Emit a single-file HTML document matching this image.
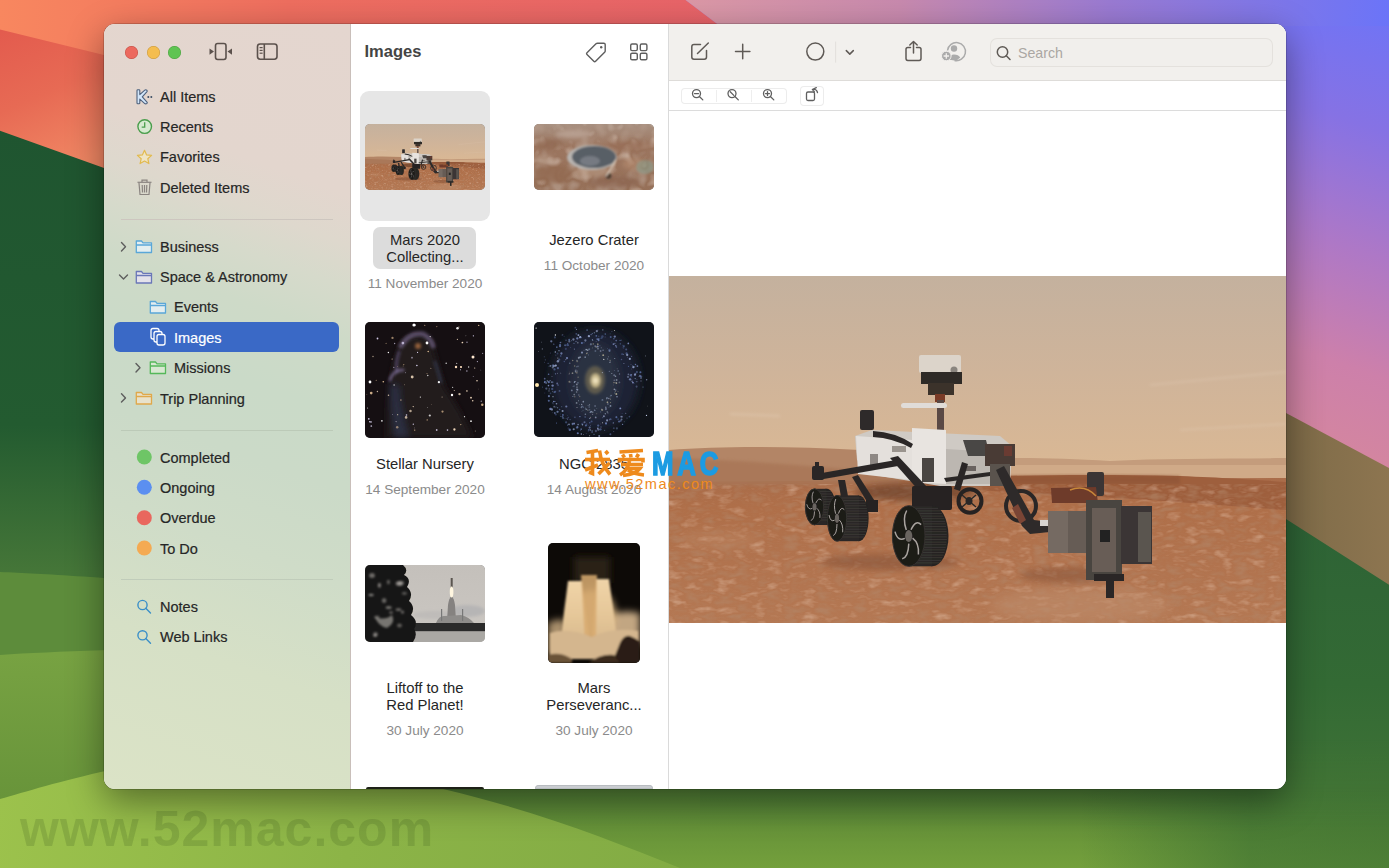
<!DOCTYPE html>
<html><head><meta charset="utf-8">
<style>
html,body{margin:0;padding:0;}
body{width:1389px;height:868px;overflow:hidden;position:relative;font-family:"Liberation Sans",sans-serif;background:#2a5e33;}
.abs{position:absolute;}
#wall{position:absolute;left:0;top:0;}
#win{position:absolute;left:104px;top:24px;width:1182px;height:765px;border-radius:11px;overflow:hidden;box-shadow:0 12px 36px rgba(0,0,0,0.42),0 0 0 0.5px rgba(0,0,0,0.3);background:#fff;}
#side{position:absolute;left:0;top:0;width:246px;height:765px;background:linear-gradient(200deg,#e4d6cf 0%,#e3d6ce 20%,#ded8cd 26%,#d6dacb 31%,#cedac8 37%,#cadac8 46%,#cbdac8 55%,#cfdcc8 66%,#d6e0c6 80%,#dbe3c6 100%);}
#sep1{position:absolute;left:246px;top:0;width:1px;height:765px;background:#c9bfba;}
#mid{position:absolute;left:247px;top:0;width:317px;height:765px;background:#fff;}
#sep2{position:absolute;left:564px;top:0;width:1px;height:765px;background:#dadada;}
#right{position:absolute;left:565px;top:0;width:617px;height:765px;background:#fff;}
.it{position:absolute;font-size:14.5px;color:#262626;white-space:nowrap;-webkit-text-stroke-width:0.2px;}
.thumb{border-radius:5px;overflow:hidden;background:#777;}
.ttl{position:absolute;font-size:14.8px;color:#262626;text-align:center;white-space:nowrap;line-height:17px;}
.dt{position:absolute;font-size:13.6px;color:#8b8b8b;text-align:center;white-space:nowrap;}
</style></head><body>
<svg width="0" height="0" style="position:absolute"><defs><symbol id="marsScene" viewBox="669 276 617 347" preserveAspectRatio="xMidYMid slice">
  <defs>
   <linearGradient id="msky" x1="0" y1="276" x2="0" y2="470" gradientUnits="userSpaceOnUse"><stop offset="0" stop-color="#c4b19e"/><stop offset="0.5" stop-color="#cfb49a"/><stop offset="1" stop-color="#dab894"/></linearGradient>
   <linearGradient id="mgnd" x1="0" y1="470" x2="0" y2="623" gradientUnits="userSpaceOnUse"><stop offset="0" stop-color="#a86c4a"/><stop offset="0.25" stop-color="#af6f49"/><stop offset="0.6" stop-color="#b1734e"/><stop offset="1" stop-color="#b47853"/></linearGradient>
   <filter id="mb1" x="-10%" y="-10%" width="120%" height="120%"><feGaussianBlur stdDeviation="0.6"/></filter>
   <filter id="mb2" x="-20%" y="-20%" width="140%" height="140%"><feGaussianBlur stdDeviation="1.5"/></filter>
   <filter id="mb3" x="-20%" y="-20%" width="140%" height="140%"><feGaussianBlur stdDeviation="3"/></filter>
   <filter id="mb6" x="-20%" y="-20%" width="140%" height="140%"><feGaussianBlur stdDeviation="6"/></filter>
  </defs>
  <rect x="669" y="276" width="617" height="200" fill="url(#msky)"/>
  <!-- faint clouds -->
  <g filter="url(#mb2)" opacity="0.35">
   <path d="M730,414 L780,416" stroke="#e8d4c0" stroke-width="2"/>
   <path d="M1150,385 L1286,372" stroke="#e2cdb8" stroke-width="2"/>
   <path d="M1180,430 L1286,424" stroke="#e2cdb8" stroke-width="2"/>
  </g>
  <rect x="669" y="470" width="617" height="153" fill="url(#mgnd)"/>
  <!-- distant hills left -->
  <path d="M669,450 C720,446 790,446 860,450 L960,456 L960,480 L669,482 Z" fill="#b38566" filter="url(#mb1)"/>
  <path d="M669,458 C740,460 820,466 900,474 L900,484 L669,486 Z" fill="#a87656" opacity="0.8" filter="url(#mb2)"/>
  <!-- right: far hills, light band, dune -->
  <path d="M960,459 C1020,457 1060,458 1110,461 C1160,458 1220,459 1286,458 L1286,478 L960,480 Z" fill="#c49c7c" filter="url(#mb1)"/>
  <path d="M960,465 L1286,465 L1286,478 L960,478 Z" fill="#d0aa88" filter="url(#mb1)"/>
  <path d="M940,478 C1000,475 1100,474 1180,476 C1230,478 1260,480 1286,482 L1286,510 C1230,506 1160,500 1100,497 C1040,494 980,490 940,488 Z" fill="#9e5f3e" filter="url(#mb1)"/>
  <path d="M940,478 C1000,475 1100,474 1180,476 L1180,484 C1100,484 1000,484 940,484 Z" fill="#8c5236" opacity="0.6" filter="url(#mb2)"/>
  <!-- ground texture -->
  <filter id="mtex" x="0" y="0" width="1" height="1">
   <feTurbulence type="fractalNoise" baseFrequency="0.06 0.14" numOctaves="3" seed="4" result="n"/>
   <feColorMatrix in="n" type="matrix" values="0 0 0 0 0.45  0 0 0 0 0.25  0 0 0 0 0.15  -3 0 0 0 1.5" result="d"/>
   <feColorMatrix in="n" type="matrix" values="0 0 0 0 0.78  0 0 0 0 0.56  0 0 0 0 0.43  2.4 0 0 0 -1.3" result="l"/>
   <feMerge><feMergeNode in="d"/><feMergeNode in="l"/></feMerge>
   <feComposite in2="SourceAlpha" operator="in"/>
  </filter>
  <rect x="669" y="484" width="617" height="139" fill="#000" filter="url(#mtex)" opacity="0.55"/>
  <g filter="url(#mb6)" opacity="0.5">
   <ellipse cx="1080" cy="605" rx="90" ry="18" fill="#c09070"/>
   <ellipse cx="720" cy="540" rx="40" ry="8" fill="#bc8664"/>
  </g>
  <!-- shadows -->
  <ellipse cx="890" cy="562" rx="70" ry="8" fill="#7a4a30" opacity="0.45" filter="url(#mb3)"/>
  <ellipse cx="915" cy="492" rx="60" ry="9" fill="#5a3420" opacity="0.55" filter="url(#mb3)"/>
  <ellipse cx="1070" cy="575" rx="50" ry="8" fill="#7a4a30" opacity="0.4" filter="url(#mb3)"/>
  <!-- rover -->
  <g filter="url(#mb1)">
   <!-- mast head -->
   <rect x="919" y="355" width="42" height="18" rx="2" fill="#dcd4ca"/>
   <circle cx="954" cy="370" r="3.5" fill="#8a857f"/>
   <rect x="921" y="372" width="41" height="12" fill="#2e2a28"/>
   <rect x="928" y="383" width="26" height="12" fill="#3a302c"/>
   <rect x="935" y="394" width="10" height="8" fill="#7a3a28"/>
   <rect x="937" y="400" width="7" height="32" fill="#5a4a44"/>
   <rect x="901" y="403" width="46" height="5" rx="2.5" fill="#e0dcd8"/>
   <!-- RTG/antenna -->
   <rect x="860" y="410" width="14" height="20" rx="2" fill="#2e2c2c"/>
   <!-- body -->
   <path d="M855,436 L872,430 L1000,436 L1012,446 L1010,486 L940,486 L880,476 L857,460 Z" fill="#cfcac4"/>
   <path d="M856,436 L912,440 L912,480 L858,474 Z" fill="#e4e0dc"/>
   <path d="M912,428 L946,430 L946,484 L912,482 Z" fill="#e8e4e0"/>
   <path d="M946,449 L995,452 L995,484 L946,484 Z" fill="#bcb7b1"/>
   <path d="M873,431 Q895,432 913,444 L911,448 Q893,438 873,437 Z" fill="#2a2726"/>
   <rect x="870" y="454" width="8" height="14" fill="#8e8884"/>
   <rect x="892" y="446" width="14" height="6" fill="#9a948e"/>
   <rect x="922" y="458" width="12" height="24" fill="#4a4542"/>
   <rect x="962" y="466" width="14" height="5" fill="#6a6460"/>
   <path d="M966,447 A10,9 0 0 1 984,447" fill="none" stroke="#3a3838" stroke-width="1.8"/>
   <path d="M963,440 L986,440 L990,456 L968,456 Z" fill="#4a4644"/>
   <rect x="985" y="444" width="30" height="22" fill="#4a3a34"/>
   <rect x="1004" y="446" width="8" height="10" fill="#6a3a30"/>
   <rect x="990" y="464" width="20" height="22" fill="#5a534e"/>
   <!-- suspension -->
   <path d="M816,474 L896,460 L898,466 L818,480 Z" fill="#2a2827"/>
   <rect x="812" y="466" width="12" height="14" rx="2" fill="#2a2827"/>
   <rect x="815" y="462" width="4" height="6" fill="#2a2827"/>
   <path d="M838,480 L845,480 L848,496 L841,497 Z" fill="#2a2827"/>
   <path d="M852,477 L858,475 L878,506 L872,510 Z" fill="#2a2827"/>
   <rect x="866" y="500" width="12" height="12" fill="#252322"/>
   <path d="M890,458 L898,456 L928,488 L920,492 Z" fill="#2a2827"/>
   <rect x="912" y="486" width="40" height="24" rx="2" fill="#252322"/>
   <path d="M962,462 L968,464 L960,491 L954,489 Z" fill="#2a2827"/>
   <path d="M944,478 L990,472 L990,476 L946,482 Z" fill="#2a2827"/>
   <!-- wheels -->
   <ellipse cx="826.5" cy="506.9" rx="9.2" ry="18.1" fill="#252321"/><rect x="814.5" y="488.8" width="12.0" height="36.2" fill="#2a2826"/><path d="M817.4,491.4 L830.8,491.4" stroke="#3e3b38" stroke-width="0.8"/><path d="M818.4,494.0 L832.3,494.0" stroke="#3e3b38" stroke-width="0.8"/><path d="M819.0,496.6 L833.3,496.6" stroke="#3e3b38" stroke-width="0.8"/><path d="M819.5,499.2 L834.0,499.2" stroke="#3e3b38" stroke-width="0.8"/><path d="M819.8,501.8 L834.4,501.8" stroke="#3e3b38" stroke-width="0.8"/><path d="M820.0,504.4 L834.7,504.4" stroke="#3e3b38" stroke-width="0.8"/><path d="M820.0,507.0 L834.8,507.0" stroke="#3e3b38" stroke-width="0.8"/><path d="M820.0,509.6 L834.7,509.6" stroke="#3e3b38" stroke-width="0.8"/><path d="M819.8,512.2 L834.4,512.2" stroke="#3e3b38" stroke-width="0.8"/><path d="M819.5,514.8 L833.9,514.8" stroke="#3e3b38" stroke-width="0.8"/><path d="M819.0,517.4 L833.2,517.4" stroke="#3e3b38" stroke-width="0.8"/><path d="M818.3,520.0 L832.2,520.0" stroke="#3e3b38" stroke-width="0.8"/><ellipse cx="814.5" cy="506.9" rx="9.2" ry="18.1" fill="#1c1a19" stroke="#34312e" stroke-width="1"/><path d="M816.7,508.2 Q820.5,511.2 819.9,517.9" stroke="#a9a49e" stroke-width="0.9" fill="none"/><path d="M814.5,511.4 Q814.3,519.6 810.8,520.5" stroke="#a9a49e" stroke-width="0.9" fill="none"/><path d="M812.3,508.4 Q808.3,510.4 806.8,504.3" stroke="#a9a49e" stroke-width="0.9" fill="none"/><path d="M813.1,503.3 Q810.9,496.4 813.4,491.7" stroke="#a9a49e" stroke-width="0.9" fill="none"/><path d="M815.8,503.2 Q818.5,496.9 821.5,500.1" stroke="#a9a49e" stroke-width="0.9" fill="none"/><ellipse cx="814.5" cy="506.9" rx="2.0" ry="3.6" fill="#6a6560"/>
   <ellipse cx="859.0" cy="518.3" rx="9.6" ry="22.9" fill="#252321"/><rect x="837.0" y="495.4" width="22.0" height="45.8" fill="#2a2826"/><path d="M839.7,498.0 L863.0,498.0" stroke="#3e3b38" stroke-width="0.8"/><path d="M840.7,500.6 L864.5,500.6" stroke="#3e3b38" stroke-width="0.8"/><path d="M841.3,503.2 L865.5,503.2" stroke="#3e3b38" stroke-width="0.8"/><path d="M841.8,505.8 L866.2,505.8" stroke="#3e3b38" stroke-width="0.8"/><path d="M842.2,508.4 L866.8,508.4" stroke="#3e3b38" stroke-width="0.8"/><path d="M842.5,511.0 L867.2,511.0" stroke="#3e3b38" stroke-width="0.8"/><path d="M842.6,513.6 L867.5,513.6" stroke="#3e3b38" stroke-width="0.8"/><path d="M842.7,516.2 L867.6,516.2" stroke="#3e3b38" stroke-width="0.8"/><path d="M842.8,518.8 L867.6,518.8" stroke="#3e3b38" stroke-width="0.8"/><path d="M842.7,521.4 L867.6,521.4" stroke="#3e3b38" stroke-width="0.8"/><path d="M842.6,524.0 L867.4,524.0" stroke="#3e3b38" stroke-width="0.8"/><path d="M842.4,526.6 L867.1,526.6" stroke="#3e3b38" stroke-width="0.8"/><path d="M842.1,529.2 L866.6,529.2" stroke="#3e3b38" stroke-width="0.8"/><path d="M841.7,531.8 L866.0,531.8" stroke="#3e3b38" stroke-width="0.8"/><path d="M841.1,534.4 L865.1,534.4" stroke="#3e3b38" stroke-width="0.8"/><path d="M840.3,537.0 L864.0,537.0" stroke="#3e3b38" stroke-width="0.8"/><ellipse cx="837.0" cy="518.3" rx="9.6" ry="22.9" fill="#1c1a19" stroke="#34312e" stroke-width="1"/><path d="M839.3,520.0 Q843.3,523.8 842.7,532.3" stroke="#a9a49e" stroke-width="1.0" fill="none"/><path d="M837.0,524.0 Q836.8,534.3 833.2,535.5" stroke="#a9a49e" stroke-width="1.0" fill="none"/><path d="M834.7,520.1 Q830.5,522.7 829.0,515.0" stroke="#a9a49e" stroke-width="1.0" fill="none"/><path d="M835.6,513.7 Q833.2,505.0 835.8,499.0" stroke="#a9a49e" stroke-width="1.0" fill="none"/><path d="M838.4,513.6 Q841.1,505.7 844.3,509.7" stroke="#a9a49e" stroke-width="1.0" fill="none"/><ellipse cx="837.0" cy="518.3" rx="2.1" ry="4.6" fill="#6a6560"/>
   <ellipse cx="932.2" cy="536.0" rx="16.3" ry="30.3" fill="#252321"/><rect x="908.7" y="505.7" width="23.5" height="60.6" fill="#2a2826"/><path d="M912.7,508.3 L938.1,508.3" stroke="#3e3b38" stroke-width="0.8"/><path d="M914.2,510.9 L940.4,510.9" stroke="#3e3b38" stroke-width="0.8"/><path d="M915.3,513.5 L942.0,513.5" stroke="#3e3b38" stroke-width="0.8"/><path d="M916.1,516.1 L943.3,516.1" stroke="#3e3b38" stroke-width="0.8"/><path d="M916.7,518.7 L944.2,518.7" stroke="#3e3b38" stroke-width="0.8"/><path d="M917.3,521.3 L945.0,521.3" stroke="#3e3b38" stroke-width="0.8"/><path d="M917.7,523.9 L945.6,523.9" stroke="#3e3b38" stroke-width="0.8"/><path d="M918.0,526.5 L946.1,526.5" stroke="#3e3b38" stroke-width="0.8"/><path d="M918.2,529.1 L946.5,529.1" stroke="#3e3b38" stroke-width="0.8"/><path d="M918.4,531.7 L946.7,531.7" stroke="#3e3b38" stroke-width="0.8"/><path d="M918.5,534.3 L946.8,534.3" stroke="#3e3b38" stroke-width="0.8"/><path d="M918.5,536.9 L946.9,536.9" stroke="#3e3b38" stroke-width="0.8"/><path d="M918.4,539.5 L946.8,539.5" stroke="#3e3b38" stroke-width="0.8"/><path d="M918.3,542.1 L946.6,542.1" stroke="#3e3b38" stroke-width="0.8"/><path d="M918.1,544.7 L946.3,544.7" stroke="#3e3b38" stroke-width="0.8"/><path d="M917.8,547.3 L945.8,547.3" stroke="#3e3b38" stroke-width="0.8"/><path d="M917.4,549.9 L945.2,549.9" stroke="#3e3b38" stroke-width="0.8"/><path d="M916.9,552.5 L944.5,552.5" stroke="#3e3b38" stroke-width="0.8"/><path d="M916.3,555.1 L943.6,555.1" stroke="#3e3b38" stroke-width="0.8"/><path d="M915.5,557.7 L942.4,557.7" stroke="#3e3b38" stroke-width="0.8"/><path d="M914.5,560.3 L941.0,560.3" stroke="#3e3b38" stroke-width="0.8"/><path d="M913.2,562.9 L939.0,562.9" stroke="#3e3b38" stroke-width="0.8"/><ellipse cx="908.7" cy="536.0" rx="16.3" ry="30.3" fill="#1c1a19" stroke="#34312e" stroke-width="1"/><path d="M912.6,538.2 Q919.4,543.3 918.4,554.5" stroke="#a9a49e" stroke-width="1.5" fill="none"/><path d="M908.8,543.6 Q908.3,557.2 902.2,558.8" stroke="#a9a49e" stroke-width="1.5" fill="none"/><path d="M904.8,538.4 Q897.7,541.8 895.0,531.6" stroke="#a9a49e" stroke-width="1.5" fill="none"/><path d="M906.3,529.9 Q902.3,518.4 906.7,510.5" stroke="#a9a49e" stroke-width="1.5" fill="none"/><path d="M911.0,529.8 Q915.7,519.3 921.1,524.6" stroke="#a9a49e" stroke-width="1.5" fill="none"/><ellipse cx="908.7" cy="536.0" rx="3.6" ry="6.1" fill="#6a6560"/>
   <ellipse cx="970" cy="501" rx="11.5" ry="11.8" fill="none" stroke="#262422" stroke-width="4"/>
   <ellipse cx="969" cy="501" rx="3.5" ry="4" fill="#2a2826"/>
   <path d="M962,495 L976,507 M962,507 L976,495" stroke="#2a2826" stroke-width="1.5"/>
   <ellipse cx="1021" cy="506" rx="15" ry="15" fill="none" stroke="#2a2827" stroke-width="4"/>
   <!-- arm -->
   <path d="M996,470 L1004,466 L1034,520 L1050,522 L1050,532 L1030,534 L1022,526 Z" fill="#2e2b2a"/>
   <path d="M1012,508 L1018,504 L1026,520 L1020,524 Z" fill="#7a4436"/>
   <rect x="1040" y="520" width="10" height="6" fill="#d8d4d0"/>
   <!-- turret -->
   <rect x="1087" y="472" width="17" height="24" rx="2" fill="#3a3634"/>
   <path d="M1051,488 L1096,487 L1098,503 L1052,503 Z" fill="#6e3a2a"/>
   <path d="M1070,490 Q1085,484 1096,496" stroke="#c8883a" stroke-width="1.5" fill="none"/>
   <rect x="1048" y="511" width="38" height="42" fill="#665c54"/>
   <rect x="1048" y="511" width="20" height="42" fill="#746a62"/>
   <rect x="1086" y="500" width="36" height="80" fill="#4a4440"/>
   <rect x="1092" y="508" width="24" height="64" fill="#675d56"/>
   <rect x="1100" y="530" width="10" height="12" fill="#222"/>
   <rect x="1121" y="506" width="31" height="58" fill="#3a3634"/>
   <rect x="1138" y="512" width="13" height="50" fill="#5a5450"/>
   <rect x="1106" y="578" width="8" height="20" fill="#2a2827"/>
   <rect x="1094" y="574" width="30" height="7" fill="#2a2827"/>
  </g>
 </symbol></defs></svg>
<svg id="wall" width="1389" height="868" viewBox="0 0 1389 868">
 <defs>
  <linearGradient id="gOr" x1="0" y1="0" x2="720" y2="0" gradientUnits="userSpaceOnUse"><stop offset="0" stop-color="#f8875f"/><stop offset="0.4" stop-color="#ee6e5f"/><stop offset="1" stop-color="#e76369"/></linearGradient>
  <linearGradient id="gRed" x1="0" y1="30" x2="60" y2="170" gradientUnits="userSpaceOnUse"><stop offset="0" stop-color="#e35b4e"/><stop offset="0.5" stop-color="#e76a54"/><stop offset="1" stop-color="#f08663"/></linearGradient>
  <linearGradient id="gPur" x1="1389" y1="0" x2="1250" y2="430" gradientUnits="userSpaceOnUse"><stop offset="0" stop-color="#6c74f8"/><stop offset="0.28" stop-color="#8672e4"/><stop offset="0.55" stop-color="#ae78c6"/><stop offset="0.8" stop-color="#cd80aa"/><stop offset="1" stop-color="#d4869f"/></linearGradient>
  <linearGradient id="gPurTop" x1="690" y1="0" x2="1389" y2="0" gradientUnits="userSpaceOnUse"><stop offset="0" stop-color="#db98a6"/><stop offset="0.3" stop-color="#c88aae"/><stop offset="0.6" stop-color="#9a7ad2"/><stop offset="1" stop-color="#6b74f8"/></linearGradient>
  <linearGradient id="gGreenL" x1="0" y1="130" x2="0" y2="868" gradientUnits="userSpaceOnUse"><stop offset="0" stop-color="#1f5530"/><stop offset="0.4" stop-color="#235b30"/><stop offset="0.6" stop-color="#457638"/><stop offset="1" stop-color="#4f7f38"/></linearGradient>
  <linearGradient id="gGreenR" x1="0" y1="500" x2="0" y2="868" gradientUnits="userSpaceOnUse"><stop offset="0" stop-color="#2d6236"/><stop offset="0.5" stop-color="#336a34"/><stop offset="1" stop-color="#467838"/></linearGradient>
  <linearGradient id="mBotG" x1="0" y1="740" x2="0" y2="830" gradientUnits="userSpaceOnUse"><stop offset="0" stop-color="#fff" stop-opacity="0"/><stop offset="1" stop-color="#fff" stop-opacity="1"/></linearGradient>
  <mask id="mBot" maskUnits="userSpaceOnUse" x="0" y="0" width="1389" height="868"><rect x="0" y="0" width="1389" height="868" fill="url(#mBotG)"/></mask>
  <linearGradient id="gBot" x1="0" y1="789" x2="0" y2="868" gradientUnits="userSpaceOnUse"><stop offset="0" stop-color="#5a8636"/><stop offset="1" stop-color="#74a03c"/></linearGradient>
  <linearGradient id="gBotR" x1="1080" y1="0" x2="1389" y2="0" gradientUnits="userSpaceOnUse"><stop offset="0" stop-color="#2e6430" stop-opacity="0"/><stop offset="0.55" stop-color="#2e6430" stop-opacity="0.5"/><stop offset="1" stop-color="#2e6430" stop-opacity="0.55"/></linearGradient>
  <linearGradient id="gHill2" x1="0" y1="655" x2="0" y2="800" gradientUnits="userSpaceOnUse"><stop offset="0" stop-color="#77a242"/><stop offset="1" stop-color="#68943a"/></linearGradient>
  <linearGradient id="gHill" x1="0" y1="780" x2="700" y2="868" gradientUnits="userSpaceOnUse"><stop offset="0" stop-color="#9cc24c"/><stop offset="0.5" stop-color="#8cb447"/><stop offset="1" stop-color="#82ab44"/></linearGradient>
  <linearGradient id="gBrown" x1="1286" y1="0" x2="1389" y2="0" gradientUnits="userSpaceOnUse"><stop offset="0" stop-color="#7e6b48"/><stop offset="1" stop-color="#8d7550"/></linearGradient>
 </defs>
 <rect x="0" y="0" width="1389" height="868" fill="#2e6535"/>
 <rect x="0" y="100" width="700" height="768" fill="url(#gGreenL)"/>
 <path d="M0,572 C60,574 120,580 443,600 L443,868 L0,868 Z" fill="#5d8c3b"/>
 <path d="M0,655 C80,650 200,646 443,650 L443,868 L0,868 Z" fill="url(#gHill2)"/>
 <rect x="700" y="400" width="689" height="468" fill="url(#gGreenR)"/>
 <g mask="url(#mBot)"><path d="M380,740 L1389,740 L1389,868 L380,868 Z" fill="url(#gBot)"/>
 <path d="M380,740 L1389,740 L1389,868 L380,868 Z" fill="url(#gBotR)"/></g>
 <path d="M0,799 C25,792 60,781 110,770 C200,750 330,760 443,789 C540,812 610,840 680,868 L0,868 Z" fill="url(#gHill)"/>
 <polygon points="-2,-2 722,-2 722,200 -2,31" fill="url(#gOr)"/>
 <polygon points="-2,29 104,55 420,135 420,290 104,168 -2,130" fill="url(#gRed)"/>
 <polygon points="700,80 1391,440 1391,586 1286,519 700,150" fill="url(#gBrown)"/>
 <polygon points="683,-2 1391,-2 1391,469 1286,413 716,23" fill="url(#gPur)"/>
 <polygon points="683,-2 1391,-2 1391,26 720,26" fill="url(#gPurTop)"/>
</svg>
<div class="abs" style="left:20px;top:800px;font-size:50px;font-weight:700;color:rgba(60,90,30,0.2);letter-spacing:1px;">www.52mac.com</div>

<div id="win">
 <div id="side"></div>
 <div id="sep1"></div>
 <div id="mid"></div>
 <div id="sep2"></div>
 <div id="right"></div>
</div>

<div id="ui" class="abs" style="left:0;top:0;width:1389px;height:868px;">
 <!-- traffic lights -->
 <div class="abs" style="left:124.9px;top:45.6px;width:13px;height:13px;border-radius:50%;background:#ec695e;box-shadow:inset 0 0 0 0.5px rgba(150,40,30,0.5);"></div>
 <div class="abs" style="left:146.7px;top:45.6px;width:13px;height:13px;border-radius:50%;background:#f4bd4f;box-shadow:inset 0 0 0 0.5px rgba(160,110,20,0.5);"></div>
 <div class="abs" style="left:168.3px;top:45.6px;width:13px;height:13px;border-radius:50%;background:#5fc452;box-shadow:inset 0 0 0 0.5px rgba(40,120,30,0.5);"></div>
 <svg class="abs" style="left:200px;top:35px" width="90" height="32" viewBox="200 35 90 32">
  <g fill="none" stroke="#5b514c" stroke-width="1.6">
   <rect x="215.5" y="43.5" width="10.5" height="16" rx="2.2"/>
   <rect x="257.5" y="44" width="19.5" height="15.2" rx="2.6"/>
   <line x1="264.3" y1="44" x2="264.3" y2="59.2"/>
  </g>
  <g fill="#5b514c"><polygon points="209.5,48.5 214,51.6 209.5,54.7"/><polygon points="232,48.5 227.5,51.6 232,54.7"/>
   <rect x="259.6" y="47" width="3" height="1.2"/><rect x="259.6" y="49.8" width="3" height="1.2"/><rect x="259.6" y="52.6" width="3" height="1.2"/></g>
 </svg>

 <!-- sidebar icons -->
 <svg class="abs" style="left:0;top:0" width="360" height="660" viewBox="0 0 360 660">
  <!-- all items K -->
  <path d="M137,90.6 Q137,89.8 137.8,89.8 L139,89.8 Q139.8,89.8 139.8,90.6 L139.8,94.6 L144.5,90.3 Q145.3,89.6 146.2,89.9 L146.9,90.3 Q147.6,91 147,91.7 L142.3,96.9 L147,102.1 Q147.6,102.8 146.9,103.4 L146.2,103.8 Q145.3,104.1 144.5,103.4 L139.8,99.2 L139.8,103 Q139.8,103.8 139,103.8 L137.8,103.8 Q137,103.8 137,103 Z" fill="#d2e6fa" stroke="#4e617c" stroke-width="1.1" stroke-linejoin="round"/>
  <circle cx="148.3" cy="96.9" r="1" fill="#3e4f66"/><circle cx="151.3" cy="96.9" r="1" fill="#3e4f66"/>
  <!-- recents clock -->
  <circle cx="144.7" cy="126.6" r="6.8" fill="#d6ead0" stroke="#4a9e4c" stroke-width="1.4"/>
  <path d="M144.7,122.3 L144.7,127.1 L141.7,127.1" fill="none" stroke="#4a9e4c" stroke-width="1.3"/>
  <!-- star -->
  <path d="M144.5,150.3 L146.6,154.9 L151.6,155.4 L147.8,158.7 L148.9,163.6 L144.5,161.1 L140.1,163.6 L141.2,158.7 L137.4,155.4 L142.4,154.9 Z" fill="#efe4c4" stroke="#e2ba4e" stroke-width="1.2" stroke-linejoin="round"/>
  <!-- trash -->
  <g fill="none" stroke="#8a8480" stroke-width="1.2">
   <path d="M137.5,182.3 L151.5,182.3"/><path d="M142,182 L142,180.2 L147,180.2 L147,182"/>
   <path d="M139,183 L140,194.5 L149,194.5 L150,183"/>
   <path d="M142.2,185 L142.5,192.5 M144.5,185 L144.5,192.5 M146.8,185 L146.5,192.5"/>
  </g>
  <!-- separators -->
  <rect x="121" y="219" width="212" height="1" fill="#cdc6bf"/>
  <rect x="121" y="430" width="212" height="1" fill="#bccab8"/>
  <rect x="121" y="579" width="212" height="1" fill="#c0ccba"/>
  <!-- chevrons -->
  <g fill="none" stroke="#5e5e5e" stroke-width="1.4" stroke-linecap="round" stroke-linejoin="round">
   <path d="M121.5,242.5 L125.5,246.7 L121.5,250.9"/>
   <path d="M119.5,275 L123.5,279 L127.5,275"/>
   <path d="M136,363.5 L140,367.7 L136,371.9"/>
   <path d="M121.5,393.7 L125.5,397.9 L121.5,402.1"/>
  </g>
  <!-- folders -->
  <g stroke-width="1.3" stroke-linejoin="round">
   <path d="M136.3,241 L141.5,241 L143,242.8 L151.5,242.8 L151.5,252.5 L136.3,252.5 Z M136.3,245 L151.5,245" fill="#e4eef0" stroke="#5aa7d8"/>
   <path d="M136.3,271.5 L141.5,271.5 L143,273.3 L151.5,273.3 L151.5,283 L136.3,283 Z M136.3,275.5 L151.5,275.5" fill="#e4e2ea" stroke="#6a77b8"/>
   <path d="M150.3,301.5 L155.5,301.5 L157,303.3 L165.5,303.3 L165.5,313 L150.3,313 Z M150.3,305.5 L165.5,305.5" fill="#e4eef0" stroke="#5aa7d8"/>
   <path d="M150.3,362 L155.5,362 L157,363.8 L165.5,363.8 L165.5,373.5 L150.3,373.5 Z M150.3,366 L165.5,366" fill="#d8e8d2" stroke="#55b85a"/>
   <path d="M136.3,392.5 L141.5,392.5 L143,394.3 L151.5,394.3 L151.5,404 L136.3,404 Z M136.3,396.5 L151.5,396.5" fill="#e8e2cc" stroke="#e0a84a"/>
  </g>
  <!-- dots -->
  <circle cx="144.3" cy="457" r="7.5" fill="#6ec566"/>
  <circle cx="144.3" cy="487.3" r="7.5" fill="#5b8ff0"/>
  <circle cx="144.3" cy="517.7" r="7.5" fill="#e9675e"/>
  <circle cx="144.3" cy="548" r="7.5" fill="#f4aa52"/>
  <!-- magnifiers -->
  <g fill="none" stroke="#3a8fc8" stroke-width="1.4" stroke-linecap="round">
   <circle cx="142.5" cy="605" r="4.6"/><path d="M145.8,608.3 L150.5,613"/>
   <circle cx="142.5" cy="635.3" r="4.6"/><path d="M145.8,638.6 L150.5,643.3"/>
  </g>
 </svg>
 <!-- selection -->
 <div class="abs" style="left:114px;top:322px;width:225px;height:30px;border-radius:6px;background:#3a69c6;"></div>
 <svg class="abs" style="left:148px;top:326px" width="22" height="22" viewBox="148 326 22 22">
  <g fill="#3a69c6" stroke="#fff" stroke-width="1.3" stroke-linejoin="round">
   <rect x="151" y="328.5" width="8" height="10.5" rx="2"/>
   <rect x="154" y="331.5" width="8" height="10.5" rx="2"/>
   <rect x="157" y="334.5" width="8" height="10.5" rx="2"/>
  </g>
 </svg>


 <!-- right toolbar -->
 <div class="abs" style="left:669px;top:24px;width:617px;height:56px;background:#f2f0ed;border-top-right-radius:11px;"></div>
 <div class="abs" style="left:669px;top:80px;width:617px;height:1px;background:#dedcd9;"></div>
 <div class="abs" style="left:669px;top:110px;width:617px;height:1px;background:#dcdcdc;"></div>
 <div class="abs" style="left:989.5px;top:37.5px;width:283px;height:29.5px;border-radius:7px;background:#f1efec;box-shadow:inset 0 0 0 1px #e4e1dd;"></div>
 <div class="abs" style="left:1018px;top:44.5px;font-size:14.2px;color:#aba7a3;">Search</div>
 <svg class="abs" style="left:669px;top:24px" width="617" height="90" viewBox="669 24 617 90">
  <g fill="none" stroke="#5f5a56" stroke-width="1.5" stroke-linecap="round" stroke-linejoin="round">
   <path d="M700.5,44.5 L694,44.5 Q691.8,44.5 691.8,46.7 L691.8,57 Q691.8,59.2 694,59.2 L704.3,59.2 Q706.5,59.2 706.5,57 L706.5,50.5"/>
   <path d="M697.5,53.5 L708.3,43"/>
   <path d="M742.7,44.3 L742.7,58.7 M735.5,51.5 L749.9,51.5"/>
   <circle cx="815.3" cy="51.6" r="8.5"/>
   <path d="M846.3,50.6 L849.8,54.1 L853.3,50.6"/>
   <path d="M913.5,41.8 L913.5,53 M909.8,45 L913.5,41.5 L917.2,45"/>
   <path d="M910.5,47.5 L907.8,47.5 Q906,47.5 906,49.3 L906,58.6 Q906,60.4 907.8,60.4 L919.2,60.4 Q921,60.4 921,58.6 L921,49.3 Q921,47.5 919.2,47.5 L916.5,47.5"/>
   <circle cx="1002.5" cy="52" r="5.2"/><path d="M1006.3,55.8 L1010,59.5"/>
  </g>
  <rect x="835.3" y="41.6" width="0.8" height="21" fill="#dedbd7"/>
  <!-- person add (disabled) -->
  <g fill="none" stroke="#ababab" stroke-width="1.5"><path d="M947.5,50.5 A9,9 0 1 1 954.5,60.4"/></g>
  <circle cx="954" cy="48.5" r="3.2" fill="#ababab"/>
  <path d="M949.5,59.8 Q950,54.5 954,54.5 Q958.5,54.5 960.2,57.5 Q958,60.3 954.5,60.4 Z" fill="#ababab"/>
  <circle cx="946.3" cy="56" r="4.8" fill="#ababab" stroke="#f2f0ed" stroke-width="1"/>
  <path d="M946.3,53.3 L946.3,58.7 M943.6,56 L949,56" stroke="#f2f0ed" stroke-width="1.3"/>
 </svg>
 <!-- zoom controls -->
 <div class="abs" style="left:680.5px;top:87.5px;width:106px;height:16.5px;border-radius:4px;box-shadow:inset 0 0 0 1px #ececec;"></div>
 <div class="abs" style="left:715.5px;top:90px;width:1px;height:12px;background:#eeeeee;"></div>
 <div class="abs" style="left:751px;top:90px;width:1px;height:12px;background:#eeeeee;"></div>
 <div class="abs" style="left:799.5px;top:85.5px;width:24px;height:20px;border-radius:4px;box-shadow:inset 0 0 0 1px #ececec;"></div>
 <svg class="abs" style="left:669px;top:81px" width="200" height="29" viewBox="669 81 200 29">
  <g fill="none" stroke="#5f5f5f" stroke-width="1.3" stroke-linecap="round">
   <circle cx="696.5" cy="93.6" r="4"/><path d="M699.4,96.5 L702.8,99.9 M694.5,93.6 L698.5,93.6"/>
   <circle cx="732" cy="93.6" r="4"/><path d="M734.9,96.5 L738.3,99.9 M730.2,91.8 L733.8,95.4"/>
   <circle cx="767.5" cy="93.6" r="4"/><path d="M770.4,96.5 L773.8,99.9 M765.5,93.6 L769.5,93.6 M767.5,91.6 L767.5,95.6"/>
   <rect x="806.5" y="92" width="8" height="8.5" rx="1.5"/>
   <path d="M812.5,89.5 Q816.5,88.5 817.5,92.5 M816.3,87.6 L812.5,89.5 L814.4,91.8"/>
  </g>
 </svg>
 <!-- main image -->
 <div id="mars" class="abs" style="left:669px;top:276px;width:617px;height:347px;overflow:hidden;"><svg width="617" height="347" style="display:block"><use href="#marsScene" width="617" height="347"/></svg></div>
 <!-- middle header -->
 <div class="abs" style="left:364.5px;top:42.3px;font-size:16.5px;font-weight:700;color:#444;">Images</div>
 <svg class="abs" style="left:580px;top:36px" width="75" height="32" viewBox="580 36 75 32">
  <g fill="none" stroke="#5e5e5e" stroke-width="1.4" stroke-linejoin="round">
   <path d="M597.5,43.2 L603.8,43.2 Q605.2,43.2 605.2,44.6 L605.2,50.9 Q605.2,51.7 604.6,52.3 L595.6,61.3 Q594.7,62.2 593.8,61.3 L587,54.5 Q586.1,53.6 587,52.7 L596,43.7 Q596.6,43.2 597.5,43.2 Z"/>
   <rect x="630.7" y="44" width="6.6" height="6.6" rx="1.4"/><rect x="640.3" y="44" width="6.6" height="6.6" rx="1.4"/>
   <rect x="630.7" y="53.2" width="6.6" height="6.6" rx="1.4"/><rect x="640.3" y="53.2" width="6.6" height="6.6" rx="1.4"/>
  </g>
  <circle cx="601.2" cy="47.3" r="1.2" fill="#5e5e5e"/>
 </svg>
 <!-- item1 selected -->
 <div class="abs" style="left:360px;top:91px;width:130px;height:130px;border-radius:9px;background:#e6e6e6;"></div>
 <div class="abs" style="left:373px;top:227px;width:103px;height:42px;border-radius:7px;background:#dcdcdc;"></div>
 <div id="th1" class="abs thumb" style="left:365px;top:124px;width:120px;height:66px;"><svg width="120" height="66" style="display:block"><use href="#marsScene" width="120" height="66"/></svg></div>
 <div id="th2" class="abs thumb" style="left:534px;top:124px;width:120px;height:66px;"><svg width="120" height="66" viewBox="0 0 120 66" style="display:block">
 <defs><linearGradient id="jz" x1="0" y1="0" x2="0" y2="1"><stop offset="0" stop-color="#a89080"/><stop offset="0.35" stop-color="#9c7660"/><stop offset="1" stop-color="#967058"/></linearGradient>
 <filter id="jb2" x="-30%" y="-30%" width="160%" height="160%"><feGaussianBlur stdDeviation="2"/></filter>
 <filter id="jb1" x="-30%" y="-30%" width="160%" height="160%"><feGaussianBlur stdDeviation="0.8"/></filter></defs>
 <rect width="120" height="66" fill="url(#jz)"/>
 <filter id="jtex" x="0" y="0" width="1" height="1">
   <feTurbulence type="fractalNoise" baseFrequency="0.07" numOctaves="2" seed="9" result="n"/>
   <feColorMatrix in="n" type="matrix" values="0 0 0 0 0.45  0 0 0 0 0.32  0 0 0 0 0.25  -3.2 0 0 0 1.6" result="d"/>
   <feColorMatrix in="n" type="matrix" values="0 0 0 0 0.76  0 0 0 0 0.64  0 0 0 0 0.56  2.6 0 0 0 -1.45" result="l"/>
   <feMerge><feMergeNode in="d"/><feMergeNode in="l"/></feMerge>
   <feComposite in2="SourceAlpha" operator="in"/>
 </filter>
 <rect width="120" height="66" fill="#000" filter="url(#jtex)" opacity="0.8"/>
 <g filter="url(#jb2)">
  <ellipse cx="15" cy="20" rx="14" ry="5" fill="#8e6650" opacity="0.7"/>
  <ellipse cx="95" cy="22" rx="22" ry="6" fill="#946a52" opacity="0.6"/>
  <ellipse cx="20" cy="50" rx="20" ry="9" fill="#92684e" opacity="0.7"/>
  <ellipse cx="80" cy="58" rx="25" ry="6" fill="#8a6450" opacity="0.6"/>
  <ellipse cx="40" cy="10" rx="18" ry="4" fill="#c0aa9c" opacity="0.7"/>
  <ellipse cx="10" cy="36" rx="10" ry="5" fill="#bca290" opacity="0.6"/>
  <ellipse cx="100" cy="40" rx="12" ry="6" fill="#b48a6e" opacity="0.6"/>
  <ellipse cx="58" cy="48" rx="20" ry="5" fill="#b89a84" opacity="0.6"/>
 </g>
 <g filter="url(#jb1)">
  <ellipse cx="58" cy="33.5" rx="25" ry="12.5" fill="#b8b4b0"/>
  <ellipse cx="60" cy="33" rx="22" ry="11" fill="#585e66"/>
  <ellipse cx="56" cy="37" rx="10" ry="5" fill="#8a8e94" opacity="0.6"/>
  <ellipse cx="111" cy="43" rx="9" ry="7" fill="#84a090" opacity="0.5"/>
  <circle cx="74.5" cy="52" r="3" fill="#4e3a2e"/>
  <path d="M82,36 L76,46 L72,52" stroke="#d0c0b0" stroke-width="1.5" fill="none"/>
 </g>
</svg></div>
 <div id="th3" class="abs thumb" style="left:365px;top:322px;width:120px;height:116px;"><svg width="120" height="116" viewBox="0 0 120 116" style="display:block">
 <defs><filter id="sb4" x="-50%" y="-50%" width="200%" height="200%"><feGaussianBlur stdDeviation="3"/></filter>
 <filter id="sb2" x="-50%" y="-50%" width="200%" height="200%"><feGaussianBlur stdDeviation="1.8"/></filter></defs>
 <rect width="120" height="116" fill="#150f12"/>
 <g filter="url(#sb4)">
  <path d="M36,20 Q48,8 66,18 Q72,40 80,66 Q96,88 108,116 L22,116 Q22,80 26,58 Q28,40 36,20 Z" fill="#231a1e"/>
  <path d="M24,62 Q26,90 30,116 L44,116 Q36,90 34,64 Z" fill="#2e3448" opacity="0.8"/>
 </g>
 <g filter="url(#sb2)" fill="none" stroke-linecap="round">
  <path d="M36,24 Q44,10 58,12 Q66,16 68,24" stroke="#8a7aa6" stroke-width="5" opacity="0.55"/>
  <path d="M34,30 Q30,42 32,50" stroke="#6a5a8a" stroke-width="3" opacity="0.6"/>
  <path d="M25,58 Q28,48 38,48" stroke="#8a7aa8" stroke-width="3" opacity="0.7"/>
  <path d="M70,40 Q74,52 76,60" stroke="#3e4a6a" stroke-width="3" opacity="0.5"/>
 </g>
 <circle cx="53" cy="24" r="3" fill="#c88048" opacity="0.7" filter="url(#sb2)"/>
 <circle cx="29.1" cy="63.0" r="0.68" fill="#ffffff" opacity="0.80"/><circle cx="108.2" cy="54.5" r="0.46" fill="#e8e0ff" opacity="0.77"/><circle cx="65.9" cy="46.3" r="0.48" fill="#ffe6c8" opacity="0.93"/><circle cx="62.7" cy="85.5" r="0.39" fill="#ffffff" opacity="0.65"/><circle cx="4.7" cy="99.7" r="0.75" fill="#e8e0ff" opacity="0.86"/><circle cx="109.7" cy="46.0" r="0.59" fill="#ffe6c8" opacity="0.94"/><circle cx="12.5" cy="16.5" r="0.88" fill="#e8e0ff" opacity="0.89"/><circle cx="101.9" cy="49.0" r="0.67" fill="#e8e0ff" opacity="0.79"/><circle cx="107.7" cy="78.7" r="0.82" fill="#ffe6c8" opacity="0.85"/><circle cx="39.5" cy="62.8" r="0.41" fill="#ffe6c8" opacity="0.82"/><circle cx="117.6" cy="31.4" r="0.62" fill="#e8e0ff" opacity="0.54"/><circle cx="95.5" cy="47.8" r="0.51" fill="#e8e0ff" opacity="0.94"/><circle cx="6.2" cy="71.1" r="1.36" fill="#ffd8a8" opacity="0.78"/><circle cx="109.8" cy="32.8" r="0.37" fill="#ffffff" opacity="0.54"/><circle cx="71.8" cy="4.6" r="0.57" fill="#ffd8a8" opacity="0.58"/><circle cx="6.0" cy="99.9" r="0.88" fill="#e8e0ff" opacity="0.69"/><circle cx="103.6" cy="45.0" r="0.72" fill="#ffffff" opacity="0.81"/><circle cx="112.0" cy="58.8" r="0.75" fill="#ffe6c8" opacity="0.97"/><circle cx="52.6" cy="30.4" r="0.54" fill="#e8e0ff" opacity="0.99"/><circle cx="38.2" cy="43.9" r="0.42" fill="#ffd8a8" opacity="0.73"/><circle cx="81.2" cy="41.2" r="0.76" fill="#ffffff" opacity="0.79"/><circle cx="113.7" cy="3.4" r="0.70" fill="#ffd8a8" opacity="0.80"/><circle cx="38.8" cy="42.5" r="0.55" fill="#ffd8a8" opacity="0.65"/><circle cx="45.5" cy="89.0" r="1.28" fill="#ffe6c8" opacity="0.66"/><circle cx="27.3" cy="92.6" r="0.45" fill="#e8e0ff" opacity="0.82"/><circle cx="12.4" cy="69.5" r="0.72" fill="#ffe6c8" opacity="0.72"/><circle cx="102.0" cy="20.3" r="0.71" fill="#e8e0ff" opacity="0.64"/><circle cx="93.9" cy="4.9" r="0.52" fill="#ffe6c8" opacity="0.93"/><circle cx="41.1" cy="95.4" r="1.31" fill="#ffe6c8" opacity="0.71"/><circle cx="62.2" cy="97.9" r="0.70" fill="#ffd8a8" opacity="0.71"/><circle cx="49.3" cy="105.9" r="0.35" fill="#e8e0ff" opacity="0.78"/><circle cx="117.3" cy="82.8" r="1.23" fill="#ffd8a8" opacity="0.77"/><circle cx="106.0" cy="99.2" r="0.88" fill="#ffffff" opacity="0.91"/><circle cx="6.3" cy="104.0" r="0.86" fill="#e8e0ff" opacity="0.79"/><circle cx="2.6" cy="86.0" r="0.51" fill="#ffffff" opacity="0.76"/><circle cx="49.8" cy="108.1" r="0.54" fill="#ffd8a8" opacity="0.99"/><circle cx="64.8" cy="93.5" r="1.11" fill="#ffffff" opacity="0.77"/><circle cx="97.4" cy="20.5" r="0.86" fill="#ffe6c8" opacity="0.91"/><circle cx="1.9" cy="72.7" r="0.38" fill="#ffd8a8" opacity="0.62"/><circle cx="73.9" cy="60.2" r="1.16" fill="#ffffff" opacity="0.93"/><circle cx="92.5" cy="6.3" r="1.24" fill="#ffffff" opacity="0.93"/><circle cx="11.2" cy="58.2" r="0.52" fill="#ffd8a8" opacity="0.69"/><circle cx="47.0" cy="35.7" r="0.89" fill="#e8e0ff" opacity="0.56"/><circle cx="66.6" cy="82.6" r="0.39" fill="#ffe6c8" opacity="0.52"/><circle cx="55.4" cy="75.1" r="0.70" fill="#ffffff" opacity="0.81"/><circle cx="51.9" cy="43.5" r="0.74" fill="#e8e0ff" opacity="0.98"/><circle cx="50.4" cy="3.0" r="0.50" fill="#ffffff" opacity="0.90"/><circle cx="27.5" cy="15.9" r="1.16" fill="#ffd8a8" opacity="0.56"/><circle cx="82.5" cy="108.1" r="0.82" fill="#e8e0ff" opacity="0.83"/><circle cx="87.6" cy="65.3" r="0.67" fill="#ffffff" opacity="0.74"/><circle cx="28.8" cy="45.3" r="0.66" fill="#e8e0ff" opacity="0.59"/><circle cx="3.8" cy="96.9" r="0.81" fill="#e8e0ff" opacity="0.92"/><circle cx="113.4" cy="67.0" r="0.37" fill="#ffe6c8" opacity="0.55"/><circle cx="89.4" cy="107.5" r="1.16" fill="#ffe6c8" opacity="0.91"/><circle cx="29.6" cy="21.5" r="0.69" fill="#e8e0ff" opacity="0.63"/><circle cx="71.7" cy="108.0" r="0.88" fill="#e8e0ff" opacity="0.75"/><circle cx="115.8" cy="48.1" r="0.44" fill="#e8e0ff" opacity="0.58"/><circle cx="48.3" cy="102.2" r="0.62" fill="#e8e0ff" opacity="0.96"/><circle cx="62.0" cy="51.5" r="0.45" fill="#ffd8a8" opacity="0.88"/><circle cx="18.3" cy="59.8" r="0.82" fill="#ffd8a8" opacity="0.84"/><circle cx="101.9" cy="68.9" r="0.89" fill="#ffe6c8" opacity="0.65"/><circle cx="32.6" cy="92.7" r="0.66" fill="#ffe6c8" opacity="0.66"/><circle cx="92.4" cy="17.4" r="0.61" fill="#ffe6c8" opacity="0.73"/><circle cx="99.5" cy="94.7" r="0.61" fill="#ffffff" opacity="0.93"/><circle cx="48.2" cy="84.6" r="0.61" fill="#ffe6c8" opacity="0.95"/><circle cx="77.5" cy="89.6" r="1.11" fill="#ffd8a8" opacity="0.62"/><circle cx="23.4" cy="30.5" r="0.74" fill="#ffffff" opacity="0.95"/><circle cx="31.1" cy="99.6" r="0.58" fill="#ffffff" opacity="0.56"/><circle cx="32.2" cy="105.2" r="1.23" fill="#ffd8a8" opacity="0.50"/><circle cx="40.5" cy="50.7" r="0.47" fill="#e8e0ff" opacity="0.70"/><circle cx="65.2" cy="14.6" r="0.72" fill="#ffffff" opacity="0.72"/><circle cx="63.2" cy="29.6" r="0.74" fill="#ffd8a8" opacity="0.88"/><circle cx="35.9" cy="78.1" r="0.79" fill="#ffd8a8" opacity="0.55"/><circle cx="112.4" cy="39.6" r="0.64" fill="#e8e0ff" opacity="0.75"/><circle cx="8.0" cy="34.6" r="0.76" fill="#ffe6c8" opacity="0.59"/><circle cx="106.0" cy="75.7" r="0.86" fill="#ffe6c8" opacity="0.96"/><circle cx="77.1" cy="75.1" r="0.52" fill="#ffe6c8" opacity="0.73"/><circle cx="37.9" cy="21.1" r="1.36" fill="#e8e0ff" opacity="0.68"/><circle cx="32.4" cy="44.7" r="0.37" fill="#ffd8a8" opacity="0.62"/><circle cx="91.7" cy="41.4" r="0.57" fill="#ffffff" opacity="0.68"/><circle cx="100.9" cy="13.8" r="0.40" fill="#ffffff" opacity="0.78"/><circle cx="108.4" cy="13.8" r="0.66" fill="#e8e0ff" opacity="0.91"/><circle cx="89.3" cy="68.5" r="0.57" fill="#ffe6c8" opacity="0.77"/><circle cx="21.1" cy="21.4" r="0.55" fill="#ffd8a8" opacity="0.52"/><circle cx="95.8" cy="102.6" r="0.56" fill="#ffd8a8" opacity="0.82"/><circle cx="116.3" cy="79.3" r="0.82" fill="#e8e0ff" opacity="0.52"/><circle cx="23.5" cy="73.3" r="0.77" fill="#ffe6c8" opacity="0.75"/><circle cx="62.8" cy="53.5" r="0.64" fill="#ffffff" opacity="0.91"/><circle cx="110.3" cy="108.9" r="0.51" fill="#ffe6c8" opacity="0.57"/><circle cx="94.5" cy="72.1" r="1.18" fill="#ffe6c8" opacity="0.75"/><circle cx="59.8" cy="3.2" r="0.53" fill="#ffd8a8" opacity="0.85"/><circle cx="16.9" cy="98.8" r="0.86" fill="#ffffff" opacity="0.87"/><circle cx="41.5" cy="93.0" r="0.82" fill="#e8e0ff" opacity="0.85"/><circle cx="27.1" cy="37.0" r="0.57" fill="#ffe6c8" opacity="0.85"/><circle cx="47.2" cy="55.0" r="1.43" fill="#ffe6c8" opacity="0.82"/>
 <circle cx="49" cy="3" r="1.6" fill="#fff"/>
 <circle cx="62" cy="21" r="1.4" fill="#fff"/>
 <circle cx="108" cy="35" r="1.5" fill="#ffe8d0"/>
 <circle cx="91" cy="45" r="1.2" fill="#ffe0c0"/>
 <circle cx="96" cy="45" r="1.1" fill="#ffe0c0"/>
 <circle cx="5" cy="60" r="1.4" fill="#fff"/>
 <circle cx="87" cy="73" r="1.2" fill="#fff"/>
</svg></div>
 <div id="th4" class="abs thumb" style="left:534px;top:322px;width:120px;height:115px;"><svg width="120" height="115" viewBox="0 0 120 115" style="display:block">
 <defs><filter id="gb5" x="-50%" y="-50%" width="200%" height="200%"><feGaussianBlur stdDeviation="5"/></filter>
 <filter id="gb2" x="-50%" y="-50%" width="200%" height="200%"><feGaussianBlur stdDeviation="1.8"/></filter>
 <filter id="gb05" x="-50%" y="-50%" width="200%" height="200%"><feGaussianBlur stdDeviation="0.5"/></filter></defs>
 <rect width="120" height="115" fill="#101319"/>
 <g filter="url(#gb5)">
  <ellipse cx="61" cy="58" rx="44" ry="50" fill="#1e2636" opacity="0.9"/>
  <ellipse cx="61" cy="58" rx="24" ry="36" fill="#2e3444" opacity="0.9"/>
 </g>
 <g filter="url(#gb05)"><circle cx="46.1" cy="35.2" r="0.90" fill="#8a96b0" opacity="0.79"/><circle cx="61.1" cy="84.0" r="0.94" fill="#8a96b0" opacity="0.46"/><circle cx="40.3" cy="64.4" r="0.41" fill="#a0a8b8" opacity="0.51"/><circle cx="56.6" cy="95.3" r="0.50" fill="#b0a890" opacity="0.80"/><circle cx="73.9" cy="82.1" r="0.98" fill="#8a96b0" opacity="0.40"/><circle cx="64.0" cy="26.7" r="0.92" fill="#a0a8b8" opacity="0.54"/><circle cx="77.8" cy="51.5" r="0.51" fill="#a0a8b8" opacity="0.88"/><circle cx="67.6" cy="87.8" r="0.58" fill="#b0a890" opacity="0.58"/><circle cx="71.9" cy="87.3" r="0.89" fill="#7a8aa8" opacity="0.69"/><circle cx="43.1" cy="38.6" r="0.44" fill="#7a8aa8" opacity="0.58"/><circle cx="53.9" cy="88.2" r="0.82" fill="#b0a890" opacity="0.43"/><circle cx="80.2" cy="53.2" r="0.97" fill="#8a96b0" opacity="0.58"/><circle cx="45.7" cy="74.4" r="0.75" fill="#b0a890" opacity="0.40"/><circle cx="80.3" cy="67.2" r="0.77" fill="#a0a8b8" opacity="0.88"/><circle cx="76.5" cy="80.6" r="0.61" fill="#b0a890" opacity="0.58"/><circle cx="35.6" cy="51.8" r="0.46" fill="#b0a890" opacity="0.77"/><circle cx="67.3" cy="25.8" r="0.53" fill="#8a96b0" opacity="0.66"/><circle cx="47.7" cy="82.4" r="0.60" fill="#a0a8b8" opacity="0.86"/><circle cx="41.6" cy="49.1" r="0.88" fill="#a0a8b8" opacity="0.71"/><circle cx="56.8" cy="22.4" r="1.00" fill="#7a8aa8" opacity="0.48"/><circle cx="84.0" cy="69.4" r="0.42" fill="#b0a890" opacity="0.77"/><circle cx="49.5" cy="85.1" r="0.67" fill="#7a8aa8" opacity="0.61"/><circle cx="81.3" cy="69.6" r="0.60" fill="#b0a890" opacity="0.50"/><circle cx="81.5" cy="54.2" r="0.78" fill="#a0a8b8" opacity="0.79"/><circle cx="76.4" cy="77.2" r="0.58" fill="#b0a890" opacity="0.63"/><circle cx="82.6" cy="57.9" r="0.99" fill="#a0a8b8" opacity="0.63"/><circle cx="40.4" cy="60.4" r="0.68" fill="#7a8aa8" opacity="0.85"/><circle cx="74.8" cy="76.5" r="0.78" fill="#a0a8b8" opacity="0.65"/><circle cx="49.0" cy="88.3" r="0.44" fill="#7a8aa8" opacity="0.80"/><circle cx="47.4" cy="85.3" r="0.86" fill="#8a96b0" opacity="0.58"/><circle cx="55.2" cy="27.2" r="0.97" fill="#7a8aa8" opacity="0.57"/><circle cx="71.3" cy="91.8" r="0.68" fill="#8a96b0" opacity="0.79"/><circle cx="51.5" cy="86.9" r="0.61" fill="#7a8aa8" opacity="0.72"/><circle cx="59.2" cy="21.9" r="0.61" fill="#b0a890" opacity="0.82"/><circle cx="73.6" cy="36.9" r="0.71" fill="#7a8aa8" opacity="0.66"/><circle cx="68.4" cy="77.9" r="0.96" fill="#7a8aa8" opacity="0.64"/><circle cx="53.7" cy="28.3" r="0.77" fill="#a0a8b8" opacity="0.87"/><circle cx="44.1" cy="55.2" r="0.58" fill="#b0a890" opacity="0.68"/><circle cx="74.4" cy="34.8" r="0.50" fill="#a0a8b8" opacity="0.62"/><circle cx="43.8" cy="20.7" r="0.86" fill="#a0a8b8" opacity="0.49"/><circle cx="55.5" cy="14.8" r="0.43" fill="#a0a8b8" opacity="0.47"/><circle cx="52.6" cy="87.2" r="0.69" fill="#a0a8b8" opacity="0.67"/><circle cx="44.8" cy="73.0" r="0.75" fill="#8a96b0" opacity="0.52"/><circle cx="80.7" cy="36.5" r="0.61" fill="#8a96b0" opacity="0.88"/><circle cx="75.5" cy="28.9" r="0.98" fill="#7a8aa8" opacity="0.67"/><circle cx="55.2" cy="85.0" r="0.73" fill="#7a8aa8" opacity="0.57"/><circle cx="38.7" cy="38.5" r="0.65" fill="#b0a890" opacity="0.68"/><circle cx="41.8" cy="50.6" r="0.49" fill="#b0a890" opacity="0.70"/><circle cx="35.8" cy="41.2" r="0.61" fill="#8a96b0" opacity="0.85"/><circle cx="80.2" cy="58.2" r="0.60" fill="#8a96b0" opacity="0.86"/><circle cx="42.9" cy="50.8" r="0.66" fill="#b0a890" opacity="0.89"/><circle cx="35.4" cy="59.7" r="0.98" fill="#b0a890" opacity="0.59"/><circle cx="84.2" cy="48.9" r="0.84" fill="#7a8aa8" opacity="0.55"/><circle cx="60.9" cy="88.3" r="0.59" fill="#8a96b0" opacity="0.89"/><circle cx="40.7" cy="59.7" r="0.80" fill="#8a96b0" opacity="0.88"/><circle cx="61.7" cy="95.4" r="0.87" fill="#8a96b0" opacity="0.81"/><circle cx="80.0" cy="60.5" r="0.87" fill="#b0a890" opacity="0.52"/><circle cx="58.7" cy="90.2" r="0.83" fill="#a0a8b8" opacity="0.54"/><circle cx="37.0" cy="59.8" r="0.41" fill="#8a96b0" opacity="0.46"/><circle cx="56.8" cy="90.1" r="0.77" fill="#7a8aa8" opacity="0.77"/><circle cx="79.5" cy="62.9" r="0.42" fill="#a0a8b8" opacity="0.53"/><circle cx="37.8" cy="68.4" r="0.93" fill="#8a96b0" opacity="0.67"/><circle cx="82.4" cy="61.1" r="0.92" fill="#b0a890" opacity="0.82"/><circle cx="42.8" cy="62.4" r="0.94" fill="#a0a8b8" opacity="0.63"/><circle cx="62.1" cy="25.1" r="0.75" fill="#b0a890" opacity="0.72"/><circle cx="40.1" cy="63.7" r="0.49" fill="#7a8aa8" opacity="0.64"/><circle cx="43.1" cy="49.1" r="0.66" fill="#a0a8b8" opacity="0.67"/><circle cx="81.1" cy="67.9" r="0.56" fill="#a0a8b8" opacity="0.44"/><circle cx="82.3" cy="72.0" r="0.99" fill="#b0a890" opacity="0.90"/><circle cx="54.9" cy="27.7" r="0.47" fill="#8a96b0" opacity="0.46"/><circle cx="44.8" cy="35.7" r="1.00" fill="#a0a8b8" opacity="0.75"/><circle cx="42.6" cy="69.9" r="0.77" fill="#a0a8b8" opacity="0.61"/><circle cx="71.8" cy="85.3" r="0.80" fill="#8a96b0" opacity="0.77"/><circle cx="57.2" cy="89.6" r="0.85" fill="#8a96b0" opacity="0.84"/><circle cx="73.6" cy="80.3" r="0.69" fill="#b0a890" opacity="0.87"/><circle cx="45.6" cy="82.5" r="0.48" fill="#8a96b0" opacity="0.55"/><circle cx="42.8" cy="44.8" r="0.56" fill="#a0a8b8" opacity="0.68"/><circle cx="60.5" cy="88.0" r="0.71" fill="#7a8aa8" opacity="0.47"/><circle cx="62.8" cy="86.4" r="0.48" fill="#a0a8b8" opacity="0.41"/><circle cx="47.9" cy="89.6" r="0.45" fill="#8a96b0" opacity="0.46"/><circle cx="43.2" cy="39.3" r="0.98" fill="#b0a890" opacity="0.45"/><circle cx="35.3" cy="50.1" r="0.43" fill="#b0a890" opacity="0.48"/><circle cx="80.3" cy="48.6" r="0.45" fill="#8a96b0" opacity="0.86"/><circle cx="41.7" cy="59.6" r="0.48" fill="#a0a8b8" opacity="0.71"/><circle cx="48.1" cy="84.4" r="0.88" fill="#7a8aa8" opacity="0.59"/><circle cx="57.0" cy="22.0" r="0.79" fill="#7a8aa8" opacity="0.80"/><circle cx="40.2" cy="72.6" r="0.84" fill="#a0a8b8" opacity="0.60"/><circle cx="76.2" cy="74.7" r="0.51" fill="#8a96b0" opacity="0.50"/><circle cx="36.6" cy="60.4" r="0.40" fill="#7a8aa8" opacity="0.64"/><circle cx="76.1" cy="38.4" r="0.59" fill="#b0a890" opacity="0.63"/><circle cx="68.3" cy="88.0" r="0.92" fill="#b0a890" opacity="0.63"/><circle cx="41.9" cy="47.8" r="0.57" fill="#8a96b0" opacity="0.48"/><circle cx="56.1" cy="90.5" r="0.61" fill="#8a96b0" opacity="0.78"/><circle cx="51.4" cy="92.3" r="0.81" fill="#8a96b0" opacity="0.74"/><circle cx="39.2" cy="64.2" r="0.57" fill="#7a8aa8" opacity="0.74"/><circle cx="58.3" cy="25.9" r="0.42" fill="#a0a8b8" opacity="0.76"/><circle cx="44.0" cy="44.4" r="0.81" fill="#7a8aa8" opacity="0.49"/><circle cx="49.3" cy="79.7" r="0.84" fill="#8a96b0" opacity="0.76"/><circle cx="72.0" cy="86.5" r="0.79" fill="#8a96b0" opacity="0.62"/><circle cx="85.5" cy="52.0" r="0.68" fill="#8a96b0" opacity="0.63"/><circle cx="52.1" cy="27.6" r="0.96" fill="#7a8aa8" opacity="0.76"/><circle cx="62.8" cy="91.8" r="0.46" fill="#b0a890" opacity="0.64"/><circle cx="53.1" cy="30.5" r="0.43" fill="#8a96b0" opacity="0.82"/><circle cx="43.4" cy="67.8" r="0.93" fill="#8a96b0" opacity="0.88"/><circle cx="67.8" cy="87.2" r="0.72" fill="#a0a8b8" opacity="0.44"/><circle cx="54.1" cy="83.5" r="0.45" fill="#8a96b0" opacity="0.89"/><circle cx="73.9" cy="90.9" r="0.66" fill="#8a96b0" opacity="0.58"/><circle cx="40.8" cy="74.7" r="0.71" fill="#b0a890" opacity="0.47"/><circle cx="82.1" cy="60.6" r="0.73" fill="#a0a8b8" opacity="0.47"/><circle cx="43.9" cy="60.8" r="0.89" fill="#7a8aa8" opacity="0.56"/><circle cx="76.5" cy="83.9" r="0.88" fill="#8a96b0" opacity="0.88"/><circle cx="50.0" cy="28.2" r="0.44" fill="#7a8aa8" opacity="0.75"/><circle cx="81.7" cy="68.1" r="0.93" fill="#7a8aa8" opacity="0.44"/><circle cx="63.8" cy="22.2" r="0.85" fill="#b0a890" opacity="0.68"/><circle cx="75.8" cy="40.3" r="0.67" fill="#8a96b0" opacity="0.81"/><circle cx="51.2" cy="35.2" r="0.84" fill="#8a96b0" opacity="0.75"/><circle cx="58.6" cy="92.3" r="0.59" fill="#a0a8b8" opacity="0.55"/><circle cx="73.2" cy="80.3" r="0.81" fill="#b0a890" opacity="0.54"/><circle cx="80.6" cy="71.0" r="0.47" fill="#8a96b0" opacity="0.88"/><circle cx="69.2" cy="33.2" r="0.92" fill="#b0a890" opacity="0.87"/><circle cx="44.7" cy="36.3" r="0.52" fill="#7a8aa8" opacity="0.58"/><circle cx="73.3" cy="89.8" r="0.84" fill="#a0a8b8" opacity="0.45"/><circle cx="38.5" cy="51.2" r="0.86" fill="#b0a890" opacity="0.62"/><circle cx="38.9" cy="74.5" r="0.59" fill="#7a8aa8" opacity="0.86"/><circle cx="43.0" cy="65.1" r="0.72" fill="#a0a8b8" opacity="0.88"/><circle cx="42.8" cy="38.3" r="0.48" fill="#8a96b0" opacity="0.83"/><circle cx="52.7" cy="27.6" r="0.69" fill="#a0a8b8" opacity="0.84"/><circle cx="44.5" cy="78.7" r="0.52" fill="#a0a8b8" opacity="0.81"/><circle cx="55.5" cy="82.8" r="0.62" fill="#a0a8b8" opacity="0.80"/><circle cx="69.1" cy="28.3" r="0.77" fill="#8a96b0" opacity="0.60"/><circle cx="75.0" cy="85.6" r="0.46" fill="#8a96b0" opacity="0.60"/><circle cx="61.4" cy="29.0" r="0.94" fill="#7a8aa8" opacity="0.50"/><circle cx="66.6" cy="29.0" r="0.88" fill="#8a96b0" opacity="0.59"/><circle cx="85.4" cy="60.4" r="0.89" fill="#a0a8b8" opacity="0.41"/><circle cx="52.8" cy="31.6" r="0.73" fill="#b0a890" opacity="0.75"/><circle cx="42.9" cy="67.3" r="0.72" fill="#8a96b0" opacity="0.80"/><circle cx="49.4" cy="79.3" r="0.57" fill="#a0a8b8" opacity="0.44"/><circle cx="77.1" cy="73.5" r="0.77" fill="#7a8aa8" opacity="0.83"/><circle cx="75.3" cy="49.3" r="0.56" fill="#8a96b0" opacity="0.76"/><circle cx="83.0" cy="74.8" r="0.80" fill="#8a96b0" opacity="0.88"/><circle cx="76.3" cy="39.9" r="0.69" fill="#a0a8b8" opacity="0.45"/><circle cx="73.0" cy="75.9" r="0.98" fill="#7a8aa8" opacity="0.67"/><circle cx="42.6" cy="80.9" r="0.85" fill="#a0a8b8" opacity="0.66"/><circle cx="66.6" cy="89.9" r="0.63" fill="#7a8aa8" opacity="0.45"/><circle cx="54.5" cy="32.9" r="0.55" fill="#7a8aa8" opacity="0.45"/><circle cx="55.6" cy="87.8" r="0.88" fill="#7a8aa8" opacity="0.44"/><circle cx="83.2" cy="46.8" r="0.53" fill="#a0a8b8" opacity="0.43"/><circle cx="40.7" cy="44.0" r="0.65" fill="#b0a890" opacity="0.61"/><circle cx="38.6" cy="51.6" r="0.45" fill="#7a8aa8" opacity="0.84"/><circle cx="51.4" cy="85.2" r="0.42" fill="#b0a890" opacity="0.46"/><circle cx="19.4" cy="42.9" r="0.66" fill="#8a9ad0" opacity="0.40"/><circle cx="67.7" cy="16.0" r="0.98" fill="#5a70a8" opacity="0.38"/><circle cx="8.6" cy="65.1" r="0.55" fill="#5a70a8" opacity="0.58"/><circle cx="32.3" cy="84.5" r="1.11" fill="#8a9ad0" opacity="0.66"/><circle cx="71.1" cy="15.0" r="0.49" fill="#8a9ad0" opacity="0.52"/><circle cx="28.5" cy="94.6" r="0.86" fill="#6a80b8" opacity="0.57"/><circle cx="38.4" cy="102.5" r="0.69" fill="#6a80b8" opacity="0.76"/><circle cx="71.8" cy="101.5" r="0.70" fill="#5a70a8" opacity="0.58"/><circle cx="39.4" cy="17.5" r="1.15" fill="#a8b8e0" opacity="0.58"/><circle cx="100.1" cy="61.6" r="0.51" fill="#5a70a8" opacity="0.35"/><circle cx="28.6" cy="89.1" r="1.01" fill="#a8b8e0" opacity="0.71"/><circle cx="43.8" cy="111.3" r="1.05" fill="#6a80b8" opacity="0.85"/><circle cx="58.3" cy="11.6" r="0.63" fill="#8a9ad0" opacity="0.60"/><circle cx="42.3" cy="11.8" r="0.86" fill="#6a80b8" opacity="0.50"/><circle cx="33.5" cy="103.0" r="0.58" fill="#6a80b8" opacity="0.84"/><circle cx="52.8" cy="102.0" r="0.52" fill="#6a80b8" opacity="0.83"/><circle cx="18.8" cy="45.4" r="1.08" fill="#a8b8e0" opacity="0.47"/><circle cx="14.9" cy="74.2" r="1.05" fill="#8a9ad0" opacity="0.35"/><circle cx="62.3" cy="13.8" r="0.85" fill="#5a70a8" opacity="0.83"/><circle cx="88.2" cy="24.9" r="0.44" fill="#6a80b8" opacity="0.46"/><circle cx="96.8" cy="53.2" r="1.16" fill="#6a80b8" opacity="0.65"/><circle cx="82.3" cy="18.6" r="0.81" fill="#a8b8e0" opacity="0.38"/><circle cx="23.0" cy="89.9" r="0.57" fill="#6a80b8" opacity="0.56"/><circle cx="51.4" cy="18.5" r="1.13" fill="#a8b8e0" opacity="0.54"/><circle cx="102.4" cy="59.7" r="0.64" fill="#8a9ad0" opacity="0.45"/><circle cx="75.5" cy="28.0" r="1.20" fill="#6a80b8" opacity="0.46"/><circle cx="19.8" cy="81.9" r="0.40" fill="#5a70a8" opacity="0.67"/><circle cx="63.9" cy="8.1" r="0.46" fill="#a8b8e0" opacity="0.69"/><circle cx="17.8" cy="87.4" r="1.17" fill="#a8b8e0" opacity="0.65"/><circle cx="90.2" cy="99.7" r="0.46" fill="#8a9ad0" opacity="0.53"/><circle cx="19.8" cy="22.2" r="0.61" fill="#6a80b8" opacity="0.73"/><circle cx="26.8" cy="94.2" r="0.52" fill="#8a9ad0" opacity="0.61"/><circle cx="100.9" cy="52.7" r="0.48" fill="#6a80b8" opacity="0.55"/><circle cx="44.1" cy="102.5" r="0.84" fill="#a8b8e0" opacity="0.57"/><circle cx="89.9" cy="24.1" r="0.84" fill="#6a80b8" opacity="0.72"/><circle cx="87.0" cy="94.6" r="0.93" fill="#a8b8e0" opacity="0.38"/><circle cx="102.6" cy="64.6" r="1.03" fill="#8a9ad0" opacity="0.38"/><circle cx="10.9" cy="59.8" r="0.95" fill="#6a80b8" opacity="0.79"/><circle cx="64.6" cy="18.3" r="0.92" fill="#6a80b8" opacity="0.81"/><circle cx="28.9" cy="92.9" r="0.97" fill="#5a70a8" opacity="0.82"/><circle cx="103.4" cy="44.1" r="0.87" fill="#8a9ad0" opacity="0.69"/><circle cx="31.1" cy="23.2" r="0.99" fill="#6a80b8" opacity="0.61"/><circle cx="21.8" cy="92.5" r="1.06" fill="#5a70a8" opacity="0.42"/><circle cx="32.9" cy="96.4" r="0.40" fill="#a8b8e0" opacity="0.63"/><circle cx="11.4" cy="37.8" r="0.67" fill="#6a80b8" opacity="0.42"/><circle cx="102.9" cy="50.1" r="1.05" fill="#5a70a8" opacity="0.59"/><circle cx="86.7" cy="98.9" r="0.90" fill="#6a80b8" opacity="0.54"/><circle cx="26.0" cy="24.2" r="0.96" fill="#8a9ad0" opacity="0.65"/><circle cx="94.3" cy="21.4" r="0.85" fill="#8a9ad0" opacity="0.80"/><circle cx="33.6" cy="93.5" r="0.41" fill="#6a80b8" opacity="0.37"/><circle cx="73.7" cy="26.5" r="0.42" fill="#6a80b8" opacity="0.56"/><circle cx="20.2" cy="84.7" r="0.89" fill="#a8b8e0" opacity="0.46"/><circle cx="100.9" cy="44.8" r="0.43" fill="#6a80b8" opacity="0.71"/><circle cx="43.1" cy="105.4" r="1.17" fill="#6a80b8" opacity="0.69"/><circle cx="52.0" cy="103.2" r="0.64" fill="#a8b8e0" opacity="0.35"/><circle cx="60.4" cy="10.8" r="0.77" fill="#a8b8e0" opacity="0.43"/><circle cx="67.0" cy="105.0" r="0.77" fill="#8a9ad0" opacity="0.43"/><circle cx="112.6" cy="57.7" r="0.75" fill="#a8b8e0" opacity="0.61"/><circle cx="20.8" cy="91.0" r="0.95" fill="#8a9ad0" opacity="0.57"/><circle cx="10.3" cy="34.7" r="0.52" fill="#6a80b8" opacity="0.48"/><circle cx="23.2" cy="61.5" r="0.93" fill="#8a9ad0" opacity="0.56"/><circle cx="66.9" cy="16.3" r="0.63" fill="#5a70a8" opacity="0.40"/><circle cx="55.8" cy="100.8" r="0.79" fill="#5a70a8" opacity="0.70"/><circle cx="77.9" cy="9.6" r="0.67" fill="#6a80b8" opacity="0.40"/><circle cx="26.1" cy="22.8" r="1.02" fill="#6a80b8" opacity="0.62"/><circle cx="76.4" cy="96.9" r="0.98" fill="#5a70a8" opacity="0.48"/><circle cx="21.9" cy="85.0" r="0.63" fill="#6a80b8" opacity="0.52"/><circle cx="103.7" cy="59.7" r="0.45" fill="#a8b8e0" opacity="0.50"/><circle cx="79.8" cy="109.6" r="0.48" fill="#a8b8e0" opacity="0.56"/><circle cx="64.2" cy="103.6" r="1.15" fill="#6a80b8" opacity="0.62"/><circle cx="33.4" cy="23.1" r="1.16" fill="#5a70a8" opacity="0.58"/><circle cx="62.7" cy="17.1" r="0.89" fill="#6a80b8" opacity="0.40"/><circle cx="34.5" cy="23.1" r="0.62" fill="#6a80b8" opacity="0.63"/><circle cx="97.7" cy="52.7" r="0.43" fill="#a8b8e0" opacity="0.79"/><circle cx="106.0" cy="54.0" r="1.13" fill="#8a9ad0" opacity="0.51"/><circle cx="76.2" cy="11.7" r="0.51" fill="#6a80b8" opacity="0.38"/><circle cx="94.5" cy="44.3" r="0.63" fill="#5a70a8" opacity="0.72"/><circle cx="56.2" cy="108.0" r="0.72" fill="#a8b8e0" opacity="0.71"/><circle cx="30.3" cy="39.6" r="0.76" fill="#6a80b8" opacity="0.47"/><circle cx="58.1" cy="110.1" r="0.98" fill="#6a80b8" opacity="0.48"/><circle cx="18.5" cy="69.7" r="0.48" fill="#a8b8e0" opacity="0.64"/><circle cx="57.6" cy="99.4" r="0.96" fill="#5a70a8" opacity="0.62"/><circle cx="16.4" cy="43.9" r="0.91" fill="#a8b8e0" opacity="0.59"/><circle cx="89.5" cy="25.8" r="0.88" fill="#5a70a8" opacity="0.38"/><circle cx="48.3" cy="101.9" r="1.18" fill="#5a70a8" opacity="0.41"/><circle cx="33.6" cy="21.6" r="0.40" fill="#6a80b8" opacity="0.82"/><circle cx="39.7" cy="107.3" r="1.06" fill="#a8b8e0" opacity="0.65"/><circle cx="20.3" cy="70.1" r="0.97" fill="#5a70a8" opacity="0.66"/><circle cx="71.3" cy="12.1" r="0.83" fill="#6a80b8" opacity="0.59"/><circle cx="10.8" cy="71.0" r="0.43" fill="#5a70a8" opacity="0.62"/><circle cx="12.3" cy="66.6" r="1.08" fill="#8a9ad0" opacity="0.47"/><circle cx="79.9" cy="16.8" r="0.71" fill="#6a80b8" opacity="0.67"/><circle cx="63.8" cy="106.5" r="0.87" fill="#8a9ad0" opacity="0.72"/><circle cx="13.4" cy="58.9" r="0.87" fill="#a8b8e0" opacity="0.46"/><circle cx="23.9" cy="46.2" r="1.11" fill="#6a80b8" opacity="0.62"/><circle cx="99.5" cy="60.7" r="0.45" fill="#a8b8e0" opacity="0.36"/><circle cx="62.8" cy="9.2" r="1.12" fill="#a8b8e0" opacity="0.58"/><circle cx="46.6" cy="108.7" r="0.42" fill="#6a80b8" opacity="0.75"/><circle cx="62.1" cy="19.6" r="0.42" fill="#8a9ad0" opacity="0.79"/><circle cx="96.1" cy="57.3" r="1.17" fill="#8a9ad0" opacity="0.70"/><circle cx="68.6" cy="95.6" r="0.58" fill="#8a9ad0" opacity="0.35"/><circle cx="20.1" cy="79.5" r="0.55" fill="#5a70a8" opacity="0.79"/><circle cx="23.6" cy="89.8" r="0.95" fill="#a8b8e0" opacity="0.46"/><circle cx="23.7" cy="85.7" r="0.52" fill="#a8b8e0" opacity="0.83"/><circle cx="51.9" cy="103.4" r="1.01" fill="#5a70a8" opacity="0.79"/><circle cx="95.8" cy="36.9" r="1.06" fill="#a8b8e0" opacity="0.80"/><circle cx="14.1" cy="41.2" r="0.56" fill="#8a9ad0" opacity="0.64"/><circle cx="50.0" cy="20.7" r="0.55" fill="#6a80b8" opacity="0.62"/><circle cx="80.9" cy="21.5" r="0.69" fill="#a8b8e0" opacity="0.42"/><circle cx="47.2" cy="107.2" r="0.84" fill="#6a80b8" opacity="0.70"/><circle cx="99.4" cy="45.1" r="1.17" fill="#a8b8e0" opacity="0.77"/><circle cx="40.9" cy="95.2" r="0.79" fill="#6a80b8" opacity="0.53"/><circle cx="101.2" cy="56.6" r="0.61" fill="#a8b8e0" opacity="0.64"/><circle cx="88.1" cy="32.1" r="0.89" fill="#5a70a8" opacity="0.62"/><circle cx="77.0" cy="97.3" r="0.58" fill="#6a80b8" opacity="0.50"/><circle cx="76.7" cy="15.0" r="1.02" fill="#6a80b8" opacity="0.59"/><circle cx="33.7" cy="21.8" r="0.73" fill="#5a70a8" opacity="0.51"/><circle cx="86.3" cy="21.8" r="0.65" fill="#6a80b8" opacity="0.69"/><circle cx="88.1" cy="91.6" r="0.43" fill="#6a80b8" opacity="0.61"/><circle cx="15.0" cy="68.9" r="0.64" fill="#a8b8e0" opacity="0.56"/><circle cx="33.0" cy="36.1" r="1.10" fill="#8a9ad0" opacity="0.77"/><circle cx="25.2" cy="37.7" r="1.14" fill="#6a80b8" opacity="0.50"/><circle cx="32.1" cy="100.3" r="1.10" fill="#5a70a8" opacity="0.53"/><circle cx="38.3" cy="101.3" r="0.66" fill="#a8b8e0" opacity="0.69"/><circle cx="14.9" cy="74.1" r="1.11" fill="#8a9ad0" opacity="0.50"/><circle cx="16.5" cy="71.4" r="0.81" fill="#5a70a8" opacity="0.40"/><circle cx="10.7" cy="56.7" r="0.89" fill="#8a9ad0" opacity="0.55"/><circle cx="21.4" cy="79.5" r="0.45" fill="#8a9ad0" opacity="0.51"/><circle cx="65.9" cy="23.8" r="0.54" fill="#6a80b8" opacity="0.57"/><circle cx="53.1" cy="8.0" r="0.85" fill="#6a80b8" opacity="0.64"/><circle cx="41.4" cy="5.7" r="0.90" fill="#5a70a8" opacity="0.49"/><circle cx="32.0" cy="18.3" r="0.75" fill="#6a80b8" opacity="0.50"/><circle cx="48.0" cy="30.6" r="1.07" fill="#a8b8e0" opacity="0.66"/><circle cx="81.8" cy="23.8" r="0.69" fill="#8a9ad0" opacity="0.85"/><circle cx="86.1" cy="18.4" r="0.70" fill="#5a70a8" opacity="0.74"/><circle cx="101.5" cy="42.5" r="0.71" fill="#6a80b8" opacity="0.78"/><circle cx="107.0" cy="59.0" r="0.69" fill="#a8b8e0" opacity="0.44"/><circle cx="107.1" cy="54.7" r="1.15" fill="#6a80b8" opacity="0.55"/><circle cx="56.6" cy="103.3" r="0.49" fill="#a8b8e0" opacity="0.54"/><circle cx="72.0" cy="100.9" r="0.93" fill="#8a9ad0" opacity="0.47"/><circle cx="18.5" cy="60.2" r="1.02" fill="#6a80b8" opacity="0.50"/><circle cx="36.1" cy="97.6" r="0.53" fill="#5a70a8" opacity="0.82"/><circle cx="14.8" cy="60.1" r="1.14" fill="#6a80b8" opacity="0.85"/><circle cx="34.2" cy="106.1" r="0.58" fill="#5a70a8" opacity="0.58"/><circle cx="93.0" cy="96.0" r="0.50" fill="#5a70a8" opacity="0.80"/><circle cx="20.9" cy="15.4" r="1.03" fill="#5a70a8" opacity="0.48"/><circle cx="79.3" cy="100.9" r="0.59" fill="#8a9ad0" opacity="0.83"/><circle cx="82.0" cy="18.6" r="0.78" fill="#5a70a8" opacity="0.47"/><circle cx="57.1" cy="12.6" r="0.71" fill="#8a9ad0" opacity="0.64"/><circle cx="51.2" cy="95.0" r="0.95" fill="#6a80b8" opacity="0.35"/><circle cx="84.1" cy="97.1" r="0.69" fill="#5a70a8" opacity="0.83"/><circle cx="24.1" cy="63.0" r="0.87" fill="#6a80b8" opacity="0.51"/><circle cx="25.6" cy="87.6" r="0.76" fill="#5a70a8" opacity="0.69"/><circle cx="16.4" cy="31.0" r="0.58" fill="#8a9ad0" opacity="0.35"/><circle cx="43.7" cy="104.9" r="0.63" fill="#8a9ad0" opacity="0.72"/><circle cx="70.7" cy="108.3" r="0.50" fill="#8a9ad0" opacity="0.65"/><circle cx="45.9" cy="15.4" r="0.90" fill="#a8b8e0" opacity="0.70"/><circle cx="73.1" cy="98.4" r="1.04" fill="#a8b8e0" opacity="0.68"/><circle cx="40.0" cy="21.4" r="0.64" fill="#6a80b8" opacity="0.63"/><circle cx="26.8" cy="34.0" r="0.70" fill="#5a70a8" opacity="0.77"/><circle cx="82.4" cy="25.0" r="0.76" fill="#8a9ad0" opacity="0.63"/><circle cx="72.1" cy="101.7" r="0.89" fill="#6a80b8" opacity="0.77"/><circle cx="97.6" cy="34.4" r="0.62" fill="#8a9ad0" opacity="0.43"/><circle cx="18.3" cy="90.7" r="0.46" fill="#5a70a8" opacity="0.53"/><circle cx="43.3" cy="16.4" r="1.15" fill="#8a9ad0" opacity="0.75"/><circle cx="26.6" cy="92.0" r="0.45" fill="#5a70a8" opacity="0.55"/><circle cx="94.0" cy="54.9" r="1.15" fill="#a8b8e0" opacity="0.38"/><circle cx="107.0" cy="56.2" r="0.89" fill="#a8b8e0" opacity="0.37"/><circle cx="16.1" cy="58.6" r="0.69" fill="#8a9ad0" opacity="0.66"/><circle cx="27.4" cy="31.5" r="1.14" fill="#8a9ad0" opacity="0.70"/><circle cx="47.1" cy="15.5" r="0.63" fill="#6a80b8" opacity="0.84"/><circle cx="22.5" cy="81.8" r="0.82" fill="#a8b8e0" opacity="0.71"/><circle cx="61.2" cy="24.1" r="0.91" fill="#a8b8e0" opacity="0.47"/><circle cx="61.9" cy="109.0" r="1.17" fill="#8a9ad0" opacity="0.39"/><circle cx="64.9" cy="17.0" r="1.09" fill="#6a80b8" opacity="0.42"/><circle cx="18.6" cy="63.6" r="1.17" fill="#8a9ad0" opacity="0.75"/><circle cx="80.8" cy="14.6" r="1.16" fill="#8a9ad0" opacity="0.73"/><circle cx="35.0" cy="102.4" r="0.83" fill="#a8b8e0" opacity="0.68"/><circle cx="26.4" cy="20.5" r="0.79" fill="#8a9ad0" opacity="0.60"/><circle cx="36.7" cy="25.4" r="0.44" fill="#5a70a8" opacity="0.83"/><circle cx="40.1" cy="101.4" r="0.84" fill="#8a9ad0" opacity="0.48"/><circle cx="101.3" cy="51.8" r="1.05" fill="#8a9ad0" opacity="0.47"/><circle cx="40.4" cy="27.1" r="0.59" fill="#a8b8e0" opacity="0.56"/><circle cx="66.5" cy="101.9" r="0.40" fill="#a8b8e0" opacity="0.41"/><circle cx="82.4" cy="95.3" r="1.01" fill="#5a70a8" opacity="0.85"/><circle cx="10.5" cy="40.3" r="0.49" fill="#5a70a8" opacity="0.61"/><circle cx="52.2" cy="111.7" r="0.48" fill="#6a80b8" opacity="0.50"/><circle cx="88.6" cy="102.3" r="0.65" fill="#8a9ad0" opacity="0.82"/><circle cx="92.6" cy="31.4" r="1.07" fill="#5a70a8" opacity="0.61"/><circle cx="23.7" cy="89.8" r="1.05" fill="#6a80b8" opacity="0.35"/><circle cx="45.9" cy="94.6" r="0.69" fill="#8a9ad0" opacity="0.83"/><circle cx="88.7" cy="23.3" r="0.47" fill="#5a70a8" opacity="0.56"/><circle cx="18.0" cy="54.4" r="0.48" fill="#a8b8e0" opacity="0.61"/><circle cx="103.0" cy="57.5" r="0.48" fill="#6a80b8" opacity="0.47"/><circle cx="98.1" cy="59.2" r="0.82" fill="#a8b8e0" opacity="0.53"/><circle cx="82.2" cy="94.4" r="0.42" fill="#6a80b8" opacity="0.66"/><circle cx="16.3" cy="87.0" r="1.12" fill="#8a9ad0" opacity="0.80"/><circle cx="55.7" cy="105.6" r="1.08" fill="#8a9ad0" opacity="0.59"/><circle cx="89.5" cy="32.3" r="0.44" fill="#a8b8e0" opacity="0.79"/><circle cx="97.0" cy="42.5" r="0.44" fill="#8a9ad0" opacity="0.56"/><circle cx="79.5" cy="22.1" r="0.95" fill="#8a9ad0" opacity="0.74"/><circle cx="19.8" cy="79.5" r="0.76" fill="#8a9ad0" opacity="0.80"/><circle cx="87.5" cy="37.4" r="0.76" fill="#8a9ad0" opacity="0.43"/><circle cx="29.1" cy="96.0" r="1.11" fill="#6a80b8" opacity="0.50"/><circle cx="97.3" cy="54.8" r="0.46" fill="#8a9ad0" opacity="0.49"/><circle cx="28.4" cy="13.1" r="0.94" fill="#5a70a8" opacity="0.37"/><circle cx="33.5" cy="97.1" r="0.70" fill="#8a9ad0" opacity="0.56"/><circle cx="21.3" cy="30.0" r="0.73" fill="#a8b8e0" opacity="0.82"/><circle cx="21.8" cy="33.1" r="0.67" fill="#6a80b8" opacity="0.37"/><circle cx="63.7" cy="24.4" r="1.00" fill="#a8b8e0" opacity="0.66"/><circle cx="15.3" cy="66.9" r="0.70" fill="#8a9ad0" opacity="0.55"/><circle cx="21.7" cy="43.6" r="1.16" fill="#a8b8e0" opacity="0.83"/><circle cx="34.2" cy="95.6" r="0.79" fill="#5a70a8" opacity="0.44"/><circle cx="92.2" cy="27.4" r="1.01" fill="#6a80b8" opacity="0.51"/><circle cx="12.1" cy="60.9" r="0.89" fill="#8a9ad0" opacity="0.60"/><circle cx="14.5" cy="63.6" r="0.78" fill="#8a9ad0" opacity="0.82"/><circle cx="14.8" cy="78.7" r="1.03" fill="#6a80b8" opacity="0.71"/><circle cx="69.9" cy="94.2" r="1.00" fill="#a8b8e0" opacity="0.61"/><circle cx="47.9" cy="21.0" r="1.08" fill="#6a80b8" opacity="0.78"/><circle cx="19.9" cy="44.0" r="0.95" fill="#a8b8e0" opacity="0.80"/><circle cx="86.3" cy="86.4" r="0.95" fill="#8a9ad0" opacity="0.84"/><circle cx="40.0" cy="101.7" r="0.89" fill="#8a9ad0" opacity="0.70"/><circle cx="87.5" cy="97.4" r="0.99" fill="#a8b8e0" opacity="0.51"/><circle cx="54.1" cy="103.4" r="0.43" fill="#5a70a8" opacity="0.49"/><circle cx="27.7" cy="84.7" r="0.61" fill="#8a9ad0" opacity="0.39"/><circle cx="23.9" cy="39.3" r="1.18" fill="#a8b8e0" opacity="0.66"/><circle cx="87.6" cy="18.1" r="0.43" fill="#a8b8e0" opacity="0.65"/><circle cx="39.0" cy="101.9" r="0.50" fill="#5a70a8" opacity="0.83"/><circle cx="14.6" cy="52.2" r="0.80" fill="#6a80b8" opacity="0.80"/><circle cx="50.5" cy="100.3" r="1.01" fill="#8a9ad0" opacity="0.54"/><circle cx="87.9" cy="94.7" r="0.96" fill="#a8b8e0" opacity="0.49"/><circle cx="98.9" cy="60.6" r="0.87" fill="#8a9ad0" opacity="0.84"/><circle cx="63.9" cy="106.0" r="0.64" fill="#a8b8e0" opacity="0.47"/><circle cx="20.5" cy="47.4" r="1.13" fill="#5a70a8" opacity="0.65"/><circle cx="17.6" cy="60.1" r="0.90" fill="#a8b8e0" opacity="0.42"/><circle cx="58.7" cy="18.4" r="0.54" fill="#a8b8e0" opacity="0.53"/><circle cx="42.0" cy="19.5" r="0.66" fill="#8a9ad0" opacity="0.53"/><circle cx="58.3" cy="17.5" r="0.50" fill="#a8b8e0" opacity="0.71"/><circle cx="98.8" cy="43.7" r="0.55" fill="#6a80b8" opacity="0.75"/><circle cx="21.5" cy="51.8" r="0.66" fill="#8a9ad0" opacity="0.68"/><circle cx="27.8" cy="20.1" r="0.46" fill="#a8b8e0" opacity="0.39"/><circle cx="37.4" cy="18.7" r="0.46" fill="#8a9ad0" opacity="0.80"/><circle cx="89.9" cy="41.5" r="0.59" fill="#a8b8e0" opacity="0.53"/><circle cx="104.9" cy="54.6" r="0.47" fill="#8a9ad0" opacity="0.68"/><circle cx="101.0" cy="52.8" r="1.12" fill="#a8b8e0" opacity="0.65"/><circle cx="66.4" cy="107.3" r="1.17" fill="#5a70a8" opacity="0.65"/><circle cx="85.1" cy="99.5" r="1.07" fill="#6a80b8" opacity="0.69"/><circle cx="68.8" cy="7.9" r="0.79" fill="#a8b8e0" opacity="0.39"/><circle cx="18.7" cy="43.5" r="1.03" fill="#6a80b8" opacity="0.64"/><circle cx="31.8" cy="26.9" r="1.06" fill="#5a70a8" opacity="0.40"/><circle cx="95.4" cy="94.7" r="0.83" fill="#6a80b8" opacity="0.47"/><circle cx="21.3" cy="69.7" r="0.96" fill="#6a80b8" opacity="0.54"/><circle cx="91.7" cy="91.3" r="0.66" fill="#a8b8e0" opacity="0.46"/><circle cx="94.4" cy="52.3" r="0.87" fill="#a8b8e0" opacity="0.47"/><circle cx="76.4" cy="112.3" r="0.98" fill="#6a80b8" opacity="0.54"/><circle cx="18.2" cy="67.0" r="1.15" fill="#5a70a8" opacity="0.59"/><circle cx="109.0" cy="65.1" r="0.51" fill="#8a9ad0" opacity="0.81"/><circle cx="54.7" cy="107.8" r="0.83" fill="#5a70a8" opacity="0.70"/><circle cx="54.3" cy="108.9" r="0.55" fill="#5a70a8" opacity="0.57"/><circle cx="82.9" cy="106.4" r="1.04" fill="#8a9ad0" opacity="0.38"/><circle cx="106.4" cy="50.3" r="1.04" fill="#5a70a8" opacity="0.84"/><circle cx="93.4" cy="35.4" r="0.50" fill="#6a80b8" opacity="0.41"/><circle cx="54.9" cy="14.2" r="1.16" fill="#a8b8e0" opacity="0.81"/><circle cx="64.3" cy="107.7" r="1.02" fill="#a8b8e0" opacity="0.47"/><circle cx="79.8" cy="106.2" r="0.91" fill="#5a70a8" opacity="0.45"/><circle cx="30.1" cy="14.2" r="0.44" fill="#6a80b8" opacity="0.52"/><circle cx="65.2" cy="114.0" r="0.99" fill="#a8b8e0" opacity="0.64"/><circle cx="35.8" cy="107.7" r="1.20" fill="#6a80b8" opacity="0.75"/><circle cx="25.5" cy="68.9" r="0.88" fill="#6a80b8" opacity="0.50"/><circle cx="35.3" cy="19.4" r="1.06" fill="#a8b8e0" opacity="0.46"/><circle cx="18.8" cy="80.9" r="0.69" fill="#6a80b8" opacity="0.56"/><circle cx="22.5" cy="101.0" r="0.56" fill="#5a70a8" opacity="0.83"/><circle cx="64.8" cy="14.3" r="0.55" fill="#6a80b8" opacity="0.43"/><circle cx="17.3" cy="19.3" r="1.14" fill="#8a9ad0" opacity="0.63"/><circle cx="23.5" cy="31.5" r="0.91" fill="#5a70a8" opacity="0.41"/><circle cx="47.3" cy="111.9" r="0.75" fill="#a8b8e0" opacity="0.75"/><circle cx="26.2" cy="23.5" r="1.03" fill="#5a70a8" opacity="0.47"/><circle cx="58.1" cy="108.6" r="0.53" fill="#a8b8e0" opacity="0.53"/><circle cx="77.7" cy="20.1" r="0.46" fill="#5a70a8" opacity="0.52"/><circle cx="35.2" cy="17.8" r="0.95" fill="#6a80b8" opacity="0.67"/><circle cx="22.8" cy="25.2" r="0.85" fill="#6a80b8" opacity="0.63"/><circle cx="75.6" cy="97.7" r="0.81" fill="#a8b8e0" opacity="0.36"/><circle cx="10.4" cy="60.6" r="0.59" fill="#8a9ad0" opacity="0.67"/><circle cx="14.9" cy="44.2" r="0.53" fill="#5a70a8" opacity="0.40"/><circle cx="63.9" cy="17.2" r="0.85" fill="#8a9ad0" opacity="0.68"/><circle cx="60.0" cy="112.3" r="0.55" fill="#8a9ad0" opacity="0.80"/><circle cx="44.4" cy="13.1" r="0.97" fill="#a8b8e0" opacity="0.84"/><circle cx="16.7" cy="86.5" r="1.09" fill="#6a80b8" opacity="0.44"/><circle cx="68.4" cy="14.5" r="1.19" fill="#5a70a8" opacity="0.45"/><circle cx="46.3" cy="14.8" r="0.90" fill="#a8b8e0" opacity="0.84"/><circle cx="25.0" cy="28.7" r="0.60" fill="#a8b8e0" opacity="0.77"/><circle cx="93.2" cy="33.0" r="1.14" fill="#a8b8e0" opacity="0.68"/><circle cx="42.4" cy="7.4" r="0.55" fill="#a8b8e0" opacity="0.69"/><circle cx="31.0" cy="96.4" r="0.46" fill="#a8b8e0" opacity="0.42"/><circle cx="97.6" cy="47.0" r="0.47" fill="#8a9ad0" opacity="0.39"/><circle cx="55.8" cy="96.3" r="0.58" fill="#a8b8e0" opacity="0.82"/></g>
 <g filter="url(#gb2)">
  <ellipse cx="61" cy="58" rx="10" ry="14" fill="#6a6450" opacity="0.8"/>
  <ellipse cx="61.5" cy="58.5" rx="5" ry="7" fill="#c8b88a"/>
  <ellipse cx="61.5" cy="58.5" rx="2.5" ry="3" fill="#f0e4c0"/>
 </g>
 <circle cx="28.9" cy="12.7" r="0.36" fill="#c8d4f0" opacity="0.51"/><circle cx="65.8" cy="33.7" r="0.32" fill="#ffffff" opacity="0.64"/><circle cx="21.4" cy="13.0" r="0.67" fill="#ffffff" opacity="0.90"/><circle cx="23.8" cy="36.0" r="0.59" fill="#ffffff" opacity="0.54"/><circle cx="72.5" cy="76.9" r="0.37" fill="#ffffff" opacity="0.64"/><circle cx="112.5" cy="93.4" r="0.64" fill="#c8d4f0" opacity="0.95"/><circle cx="68.5" cy="100.7" r="0.50" fill="#ffffff" opacity="0.71"/><circle cx="35.0" cy="52.0" r="0.40" fill="#c8d4f0" opacity="0.54"/><circle cx="55.6" cy="113.7" r="0.56" fill="#ffffff" opacity="0.57"/><circle cx="80.5" cy="8.5" r="0.55" fill="#ffffff" opacity="0.64"/><circle cx="43.0" cy="85.4" r="0.52" fill="#ffffff" opacity="0.55"/><circle cx="8.3" cy="26.9" r="0.55" fill="#c8d4f0" opacity="0.56"/><circle cx="111.3" cy="33.9" r="0.44" fill="#c8d4f0" opacity="0.95"/><circle cx="113.7" cy="84.0" r="0.31" fill="#ffffff" opacity="0.66"/><circle cx="19.0" cy="74.7" r="0.65" fill="#c8d4f0" opacity="0.65"/><circle cx="23.6" cy="51.2" r="0.45" fill="#c8d4f0" opacity="0.67"/><circle cx="2.1" cy="6.1" r="0.61" fill="#ffffff" opacity="1.00"/><circle cx="68.4" cy="50.6" r="0.67" fill="#c8d4f0" opacity="0.53"/><circle cx="7.5" cy="20.1" r="0.36" fill="#c8d4f0" opacity="0.77"/><circle cx="69.8" cy="37.3" r="0.63" fill="#ffffff" opacity="0.89"/><circle cx="49.3" cy="112.6" r="0.40" fill="#ffffff" opacity="0.75"/><circle cx="26.8" cy="51.1" r="0.47" fill="#c8d4f0" opacity="0.75"/><circle cx="4.7" cy="29.7" r="0.38" fill="#c8d4f0" opacity="0.71"/><circle cx="31.9" cy="37.7" r="0.43" fill="#c8d4f0" opacity="1.00"/><circle cx="48.5" cy="102.8" r="0.62" fill="#c8d4f0" opacity="0.75"/>
 <circle cx="3" cy="63" r="2" fill="#ffe8b0"/>
</svg></div>
 <div id="th5" class="abs thumb" style="left:365px;top:565px;width:120px;height:77px;"><svg width="120" height="77" viewBox="0 0 120 77" style="display:block">
 <defs><linearGradient id="ls" x1="0" y1="0" x2="0" y2="1"><stop offset="0" stop-color="#c4c0bb"/><stop offset="0.7" stop-color="#c9c5c0"/><stop offset="1" stop-color="#cdc9c4"/></linearGradient>
 <filter id="lb1" x="-50%" y="-50%" width="200%" height="200%"><feGaussianBlur stdDeviation="0.6"/></filter>
 <filter id="lb15" x="-50%" y="-50%" width="200%" height="200%"><feGaussianBlur stdDeviation="1.1"/></filter>
 <filter id="lb2" x="-50%" y="-50%" width="200%" height="200%"><feGaussianBlur stdDeviation="1.8"/></filter></defs>
 <rect width="120" height="77" fill="url(#ls)"/>
 <g filter="url(#lb2)">
  <ellipse cx="102" cy="46" rx="18" ry="6" fill="#aeaeb0" opacity="0.7"/>
  <ellipse cx="70" cy="50" rx="22" ry="4" fill="#b8b6b4" opacity="0.6"/>
 </g>
 <g filter="url(#lb1)">
  <path d="M82,56 L83,40 Q84,33 86.5,31 Q89,33 90,40 L91,56 Z" fill="#858280"/>
  <path d="M71,58 Q74,50 80,51 L96,50 Q104,52 109,58 Z" fill="#8e8c8a"/>
  <rect x="76" y="44" width="1.2" height="12" fill="#777"/><rect x="97" y="44" width="1.2" height="12" fill="#777"/>
  <rect x="85.7" y="13" width="2" height="10" fill="#5a5450"/>
  <ellipse cx="86.6" cy="27" rx="1.8" ry="5.5" fill="#fff6e0"/>
  <rect x="85" y="67" width="3.5" height="9" fill="#d8d2c4" opacity="0.7"/>
 </g>
 <rect x="0" y="58" width="120" height="8.5" fill="#2c2b29" filter="url(#lb1)"/>
 <rect x="0" y="66.5" width="120" height="10.5" fill="#aaa8a4"/>
 <g filter="url(#lb1)">
  <path d="M0,0 L38,0 Q44,5 39,10 Q47,14 42,22 Q49,28 44,36 Q51,42 46,50 Q54,56 49,64 Q53,70 48,77 L0,77 Z" fill="#171715"/>
 </g>
 <g filter="url(#lb15)"><ellipse cx="11.9" cy="52.3" rx="2.8" ry="1.8" fill="#bdb9b3" opacity="0.43"/><ellipse cx="34.5" cy="60.5" rx="2.5" ry="1.9" fill="#bdb9b3" opacity="0.43"/><ellipse cx="6.1" cy="30.0" rx="2.7" ry="1.3" fill="#bdb9b3" opacity="0.63"/><ellipse cx="14.4" cy="20.3" rx="1.6" ry="2.5" fill="#bdb9b3" opacity="0.61"/><ellipse cx="37.5" cy="47.1" rx="1.6" ry="1.6" fill="#bdb9b3" opacity="0.52"/><ellipse cx="10.2" cy="70.6" rx="2.2" ry="1.4" fill="#bdb9b3" opacity="0.64"/><ellipse cx="10.5" cy="69.0" rx="2.4" ry="1.9" fill="#bdb9b3" opacity="0.47"/><ellipse cx="23.4" cy="17.1" rx="1.6" ry="2.3" fill="#bdb9b3" opacity="0.43"/><ellipse cx="34.1" cy="18.6" rx="3.4" ry="2.4" fill="#bdb9b3" opacity="0.61"/><ellipse cx="33.5" cy="44.7" rx="3.0" ry="1.4" fill="#bdb9b3" opacity="0.52"/><ellipse cx="35.8" cy="18.1" rx="3.3" ry="2.4" fill="#bdb9b3" opacity="0.49"/><ellipse cx="19.1" cy="35.6" rx="2.3" ry="2.5" fill="#bdb9b3" opacity="0.49"/><ellipse cx="7.0" cy="10.5" rx="2.9" ry="2.5" fill="#bdb9b3" opacity="0.52"/><ellipse cx="23.7" cy="42.5" rx="3.0" ry="1.5" fill="#bdb9b3" opacity="0.56"/><ellipse cx="26.0" cy="47.6" rx="1.9" ry="1.4" fill="#bdb9b3" opacity="0.47"/><ellipse cx="39.4" cy="28.3" rx="2.7" ry="1.6" fill="#bdb9b3" opacity="0.39"/>
  <path d="M10,52 Q20,56 27,50 Q31,58 22,63 Q13,61 10,52 Z" fill="#b8b4ae" opacity="0.6"/>
 </g>
</svg></div>
 <div id="th6" class="abs thumb" style="left:548px;top:543px;width:92px;height:120px;"><svg width="92" height="120" viewBox="0 0 92 120" style="display:block">
 <defs><filter id="pb3" x="-50%" y="-50%" width="200%" height="200%"><feGaussianBlur stdDeviation="3.5"/></filter>
 <filter id="pb1" x="-50%" y="-50%" width="200%" height="200%"><feGaussianBlur stdDeviation="1.3"/></filter>
 <linearGradient id="plm" x1="0" y1="0" x2="0" y2="1"><stop offset="0" stop-color="#f0d4a8"/><stop offset="0.5" stop-color="#e6c89a"/><stop offset="1" stop-color="#d8b88c"/></linearGradient></defs>
 <rect width="92" height="120" fill="#0d0a07"/>
 <g filter="url(#pb3)">
  <rect x="26" y="14" width="36" height="26" fill="#2e2216" opacity="0.9"/>
  <path d="M62,72 Q76,66 92,70 L92,102 L62,102 Z" fill="#c2a682"/>
  <path d="M0,80 Q10,74 18,78 L18,112 L0,112 Z" fill="#a88e6a"/>
  <ellipse cx="44" cy="72" rx="24" ry="26" fill="#d8b480" opacity="0.85"/>
 </g>
 <g filter="url(#pb1)">
  <path d="M20,38 L34,38 L42,102 L12,102 Z" fill="url(#plm)"/>
  <path d="M48,36 L61,36 L70,102 L44,102 Z" fill="url(#plm)"/>
  <path d="M33,32 L49,32 L48,100 L37,100 Z" fill="#d8aa70" opacity="0.85"/>
  <path d="M2,90 Q20,84 44,94 Q64,84 90,88 L90,116 L2,116 Z" fill="#d4b68e"/>
  <path d="M64,120 L72,100 Q77,90 84,94 Q90,96 92,100 L92,120 Z" fill="#2a1d12"/>
  <path d="M40,120 Q54,110 66,112 L72,120 Z" fill="#3a2a1c"/>
  <path d="M0,112 Q12,108 24,116 L24,120 L0,120 Z" fill="#6a5238"/>
 </g>
</svg></div>
 <div id="th7" class="abs" style="left:366px;top:787px;width:118px;height:2px;border-radius:4px 4px 0 0;background:#1e2118;"></div>
 <div id="th8" class="abs" style="left:535px;top:785px;width:118px;height:4px;border-radius:5px 5px 0 0;background:#c9ccd0;box-shadow:inset 0 0 0 1px #b8bcc0;"></div>
 <div class="ttl" style="left:325px;width:200px;top:231.5px;">Mars 2020<br>Collecting...</div>
 <div class="dt" style="left:325px;width:200px;top:276px;">11 November 2020</div>
 <div class="ttl" style="left:494px;width:200px;top:231.5px;">Jezero Crater</div>
 <div class="dt" style="left:494px;width:200px;top:258px;">11 October 2020</div>
 <div class="ttl" style="left:325px;width:200px;top:456px;">Stellar Nursery</div>
 <div class="dt" style="left:325px;width:200px;top:481.5px;">14 September 2020</div>
 <div class="ttl" style="left:494px;width:200px;top:456px;">NGC 2835</div>
 <div class="dt" style="left:494px;width:200px;top:481.5px;">14 August 2020</div>
 <div class="ttl" style="left:325px;width:200px;top:680px;">Liftoff to the<br>Red Planet!</div>
 <div class="dt" style="left:325px;width:200px;top:722.5px;">30 July 2020</div>
 <div class="ttl" style="left:494px;width:200px;top:680px;">Mars<br>Perseveranc...</div>
 <div class="dt" style="left:494px;width:200px;top:722.5px;">30 July 2020</div>

 <!-- watermark -->
 <svg class="abs" style="left:580px;top:445px" width="70" height="35" viewBox="580 445 70 35">
  <g fill="none" stroke="#ee8a1c" stroke-width="3.6" stroke-linecap="butt" stroke-linejoin="miter">
   <path d="M586.5,452.5 L598,450.5"/>
   <path d="M585,459.5 L610,459.5"/>
   <path d="M592.5,451 L592.5,473.5 L589,472"/>
   <path d="M585,470 L598,465"/>
   <path d="M599.5,450.5 Q601,464 610,474.5"/>
   <path d="M609.5,463 L598.5,474"/>
   <path d="M605.5,451 L608,454"/>
   <path d="M619.5,452 L643,450.5"/>
   <path d="M622.5,454.5 L624.5,457.5 M630.5,454 L631,457.5 M638.5,454 L636.5,457.5"/>
   <path d="M619.5,462.5 L619.5,459.5 L643,459.5 L643,462.5"/>
   <path d="M621,464.5 L643,464.5"/>
   <path d="M629.5,461 Q628,470 620,475"/>
   <path d="M625,468.5 L640,468.5 Q636,474 623,475.5"/>
   <path d="M628,470 Q634,474 644,475"/>
  </g>
 </svg>
 <div class="abs" style="left:651.5px;top:442.5px;font-size:34px;font-weight:700;color:#1c9be2;-webkit-text-stroke:1.6px #1c9be2;letter-spacing:5px;transform:scaleX(0.76);transform-origin:0 0;line-height:40px;">MAC</div>
 <div class="abs" style="left:585px;top:474.5px;font-size:14.6px;color:#ee8a1c;letter-spacing:1.45px;line-height:18px;">www.52mac.com</div>
 <div class="it" style="left:160px;top:88.5px;">All Items</div>
 <div class="it" style="left:160px;top:119px;">Recents</div>
 <div class="it" style="left:160px;top:149.4px;">Favorites</div>
 <div class="it" style="left:160px;top:179.8px;">Deleted Items</div>
 <div class="it" style="left:160px;top:238.6px;">Business</div>
 <div class="it" style="left:160px;top:269px;">Space &amp; Astronomy</div>
 <div class="it" style="left:174px;top:299.4px;">Events</div>
 <div class="it" style="left:174px;top:329.8px;color:#fff;">Images</div>
 <div class="it" style="left:174px;top:360.2px;">Missions</div>
 <div class="it" style="left:160px;top:390.5px;">Trip Planning</div>
 <div class="it" style="left:160px;top:449.5px;">Completed</div>
 <div class="it" style="left:160px;top:479.9px;">Ongoing</div>
 <div class="it" style="left:160px;top:510.3px;">Overdue</div>
 <div class="it" style="left:160px;top:540.7px;">To Do</div>
 <div class="it" style="left:160px;top:599px;">Notes</div>
 <div class="it" style="left:160px;top:629.4px;">Web Links</div>
</div>
</body></html>
